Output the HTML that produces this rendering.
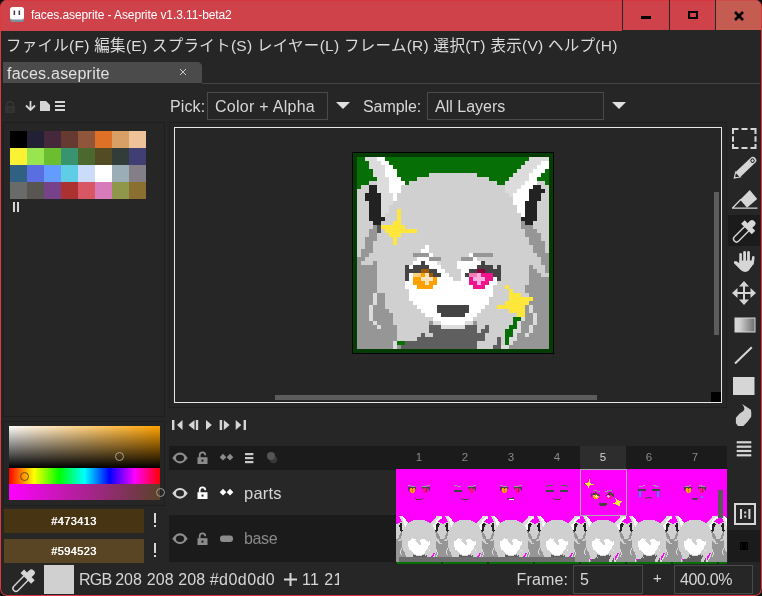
<!DOCTYPE html>
<html><head><meta charset="utf-8"><title>faces.aseprite - Aseprite v1.3.11-beta2</title>
<style>
*{box-sizing:border-box;margin:0;padding:0}
html,body{width:762px;height:596px;overflow:hidden;background:#101010}
body{position:relative;font-family:"Liberation Sans","Noto Sans CJK JP",sans-serif;color:#d6d6d6;font-size:16px}
.abs{position:absolute}
#win{left:0;top:0;width:762px;height:596px;background:#262626;border-radius:7px;overflow:hidden;will-change:transform}
#title{left:0;top:0;width:762px;height:31px}
#tbar{position:absolute;left:0;top:0;width:622px;height:31px;background:#d0424a;border-top:1px solid #d8363f}
#title .t{position:absolute;left:31px;top:8.3px;font-size:12px;letter-spacing:-.1px;color:#fff;white-space:nowrap;line-height:15px}
#frame{left:0;top:0;width:762px;height:596px;border-radius:7px;border-style:solid;border-color:#e0383f;border-width:0 1.3px 1.5px 1px}
.wbtn{position:absolute;top:0;height:30px;background:#d0424a;border-top:1px solid #d8363f}
#menu{left:6px;top:36px;font-size:15.5px;letter-spacing:.28px;line-height:20px;white-space:nowrap;color:#dcdcdc}
#tab{left:3px;top:62px;width:199px;height:21px;background:#4b4b4b}
#tab .n{position:absolute;left:4px;top:1.5px;font-size:16px;letter-spacing:.22px;line-height:20px;color:#e0e0e0}
#tabline{left:202px;top:83px;width:558px;height:1px;background:#444}
.lbl{position:absolute;font-size:16px;line-height:20px;white-space:nowrap;color:#d6d6d6}
.combo{position:absolute;border:1px solid #4a4a4a;background:#262626}
.combo span{position:absolute;left:7px;top:3.5px;font-size:16px;letter-spacing:0;line-height:20px;white-space:nowrap;color:#d6d6d6}
.panel{position:absolute;border:1px solid #1e1e1e;background:#262626}
#editor{left:174px;top:127px;width:548px;height:276px;border:1px solid #e6e6e6}
.dark{background:#1b1b1b}
.tl{position:absolute;font-size:16.5px;line-height:20px;white-space:nowrap}
.fn{position:absolute;top:450px;width:46px;text-align:center;font-size:11.5px;line-height:14px;color:#8a8a8a}
.hex{position:absolute;left:4px;width:139.5px;height:24px;text-align:center;font-size:11px;line-height:24px;color:#fff;letter-spacing:.4px;text-shadow:.45px 0 0 #fff}
.st{position:absolute;font-size:16px;line-height:22px;white-space:nowrap;color:#d6d6d6}
svg{position:absolute;overflow:visible}
</style></head><body>
<div id="win" class="abs">
<div id="title" class="abs"><div id="tbar"></div><div class="t">faces.aseprite - Aseprite v1.3.11-beta2</div>
<div class="wbtn" style="left:623px;width:46px"></div><div class="wbtn" style="left:670px;width:45px"></div><div class="wbtn" style="left:716px;background:#c45c52;width:46px;border-top-color:#cf4a4a"></div>
<svg style="left:10px;top:7px" width="14" height="15" viewBox="0 0 14 15"><rect x="0" y="1" width="14" height="14" rx="2.5" fill="#7b929e"/><rect x="0" y="0" width="14" height="12.5" rx="2.5" fill="#fff"/><rect x="3.6" y="3.5" width="1.5" height="4.5" fill="#4a3040"/><rect x="8.6" y="3.5" width="1.5" height="4.5" fill="#4a3040"/></svg>
<div class="abs" style="left:641px;top:16px;width:10px;height:3px;background:#000;"></div>
<div class="abs" style="left:688px;top:11px;width:10px;height:8px;border:2px solid #000"></div>
<svg style="left:734px;top:11.5px" width="10" height="8" viewBox="0 0 10 8"><path d="M1 0 L9 8 M9 0 L1 8" stroke="#000" stroke-width="2.6"/></svg>
</div>
<div id="menu" class="abs">ファイル(F) 編集(E) スプライト(S) レイヤー(L) フレーム(R) 選択(T) 表示(V) ヘルプ(H)</div>
<div id="tab" class="abs"><div class="n">faces.aseprite</div></div>
<svg style="left:179px;top:68px" width="8" height="8" viewBox="0 0 8 8"><path d="M1 1 L7 7 M7 1 L1 7" stroke="#c8c8c8" stroke-width="1"/></svg>
<div id="tabline" class="abs"></div>
<svg style="left:199px;top:62px" width="3" height="3" viewBox="0 0 3 3"><polygon points="0,0 3,0 3,3" fill="#262626"/></svg>
<div class="lbl" style="left:170px;top:96.5px;letter-spacing:.1px">Pick:</div>
<div class="combo" style="left:207px;top:92px;width:121px;height:28px"><span style="letter-spacing:.27px">Color + Alpha</span></div>
<div class="lbl" style="left:363px;top:96.5px;letter-spacing:-.07px">Sample:</div>
<div class="combo" style="left:427px;top:92px;width:177px;height:28px"><span>All Layers</span></div>
<svg style="left:336px;top:102px" width="14" height="7" viewBox="0 0 14 7"><path d="M0 0 H14 L7 7 Z" fill="#e0e0e0"/></svg>
<svg style="left:612px;top:102px" width="14" height="7" viewBox="0 0 14 7"><path d="M0 0 H14 L7 7 Z" fill="#e0e0e0"/></svg>
<svg style="left:5px;top:101px" width="10" height="12" viewBox="0 0 10 12"><path d="M1.6 6 V4 A3.4 3.2 0 0 1 8.4 4 V6" fill="none" stroke="#343434" stroke-width="2"/><rect x="0" y="5" width="10" height="7" fill="#343434"/><rect x="3.4" y="7.4" width="1" height="1" fill="#262626"/><rect x="5.8" y="7.4" width="1" height="1" fill="#262626"/><rect x="3.4" y="9.4" width="1" height="1" fill="#262626"/><rect x="5.8" y="9.4" width="1" height="1" fill="#262626"/></svg>
<svg style="left:25px;top:101px" width="11" height="10" viewBox="0 0 11 10"><path d="M5.5 0 V8 M1 4.5 L5.5 9 L10 4.5" stroke="#d6d6d6" stroke-width="1.8" fill="none"/></svg>
<svg style="left:40px;top:101px" width="10" height="10" viewBox="0 0 10 10"><path d="M0 0 H6 L10 4 V10 H0 Z" fill="#d6d6d6"/></svg>
<div class="abs" style="left:55px;top:101px;width:10px;height:2px;background:#d6d6d6;"></div>
<div class="abs" style="left:55px;top:105px;width:10px;height:2px;background:#d6d6d6;"></div>
<div class="abs" style="left:55px;top:109px;width:10px;height:2px;background:#d6d6d6;"></div>
<div class="panel" style="left:3px;top:122px;width:162px;height:295px"></div>
<div class="abs" style="left:10px;top:131px;width:17px;height:17px;background:#000000;"></div>
<div class="abs" style="left:27px;top:131px;width:17px;height:17px;background:#222034;"></div>
<div class="abs" style="left:44px;top:131px;width:17px;height:17px;background:#45283c;"></div>
<div class="abs" style="left:61px;top:131px;width:17px;height:17px;background:#663931;"></div>
<div class="abs" style="left:78px;top:131px;width:17px;height:17px;background:#8f563b;"></div>
<div class="abs" style="left:95px;top:131px;width:17px;height:17px;background:#df7126;"></div>
<div class="abs" style="left:112px;top:131px;width:17px;height:17px;background:#d9a066;"></div>
<div class="abs" style="left:129px;top:131px;width:17px;height:17px;background:#eec39a;"></div>
<div class="abs" style="left:10px;top:148px;width:17px;height:17px;background:#fbf236;"></div>
<div class="abs" style="left:27px;top:148px;width:17px;height:17px;background:#99e550;"></div>
<div class="abs" style="left:44px;top:148px;width:17px;height:17px;background:#6abe30;"></div>
<div class="abs" style="left:61px;top:148px;width:17px;height:17px;background:#37946e;"></div>
<div class="abs" style="left:78px;top:148px;width:17px;height:17px;background:#4b692f;"></div>
<div class="abs" style="left:95px;top:148px;width:17px;height:17px;background:#524b24;"></div>
<div class="abs" style="left:112px;top:148px;width:17px;height:17px;background:#323c39;"></div>
<div class="abs" style="left:129px;top:148px;width:17px;height:17px;background:#3f3f74;"></div>
<div class="abs" style="left:10px;top:165px;width:17px;height:17px;background:#306082;"></div>
<div class="abs" style="left:27px;top:165px;width:17px;height:17px;background:#5b6ee1;"></div>
<div class="abs" style="left:44px;top:165px;width:17px;height:17px;background:#639bff;"></div>
<div class="abs" style="left:61px;top:165px;width:17px;height:17px;background:#5fcde4;"></div>
<div class="abs" style="left:78px;top:165px;width:17px;height:17px;background:#cbdbfc;"></div>
<div class="abs" style="left:95px;top:165px;width:17px;height:17px;background:#ffffff;"></div>
<div class="abs" style="left:112px;top:165px;width:17px;height:17px;background:#9badb7;"></div>
<div class="abs" style="left:129px;top:165px;width:17px;height:17px;background:#847e87;"></div>
<div class="abs" style="left:10px;top:182px;width:17px;height:17px;background:#696a6a;"></div>
<div class="abs" style="left:27px;top:182px;width:17px;height:17px;background:#595652;"></div>
<div class="abs" style="left:44px;top:182px;width:17px;height:17px;background:#76428a;"></div>
<div class="abs" style="left:61px;top:182px;width:17px;height:17px;background:#ac3232;"></div>
<div class="abs" style="left:78px;top:182px;width:17px;height:17px;background:#d95763;"></div>
<div class="abs" style="left:95px;top:182px;width:17px;height:17px;background:#d77bba;"></div>
<div class="abs" style="left:112px;top:182px;width:17px;height:17px;background:#8f974a;"></div>
<div class="abs" style="left:129px;top:182px;width:17px;height:17px;background:#8a6f30;"></div>
<div class="abs" style="left:13px;top:202px;width:2px;height:10px;background:#d6d6d6;"></div>
<div class="abs" style="left:17px;top:202px;width:2px;height:10px;background:#d6d6d6;"></div>
<div class="panel" style="left:169px;top:122px;width:558px;height:286px"></div>
<div id="editor" class="abs"></div>
<div class="abs" style="left:352px;top:152px;width:202px;height:202px;background:#000;"></div>
<svg class="abs" style="left:353px;top:153px" width="200" height="200" viewBox="0 0 50 50" shape-rendering="crispEdges"><rect width="50" height="50" fill="#d0d0d0"/><rect x="0" y="0" width="50" height="1" fill="#043c04"/><rect x="0" y="1" width="1" height="1" fill="#043c04"/><rect x="1" y="1" width="2" height="1" fill="#067006"/><rect x="3" y="1" width="3" height="1" fill="#dcdcdc"/><rect x="6" y="1" width="2" height="1" fill="#ffffff"/><rect x="8" y="1" width="36" height="1" fill="#067006"/><rect x="44" y="1" width="5" height="1" fill="#dcdcdc"/><rect x="49" y="1" width="1" height="1" fill="#043c04"/><rect x="0" y="2" width="1" height="1" fill="#043c04"/><rect x="1" y="2" width="3" height="1" fill="#067006"/><rect x="4" y="2" width="3" height="1" fill="#dcdcdc"/><rect x="7" y="2" width="2" height="1" fill="#ffffff"/><rect x="9" y="2" width="34" height="1" fill="#067006"/><rect x="43" y="2" width="4" height="1" fill="#dcdcdc"/><rect x="47" y="2" width="2" height="1" fill="#ffffff"/><rect x="49" y="2" width="1" height="1" fill="#043c04"/><rect x="0" y="3" width="1" height="1" fill="#043c04"/><rect x="1" y="3" width="3" height="1" fill="#067006"/><rect x="4" y="3" width="4" height="1" fill="#dcdcdc"/><rect x="8" y="3" width="2" height="1" fill="#ffffff"/><rect x="10" y="3" width="32" height="1" fill="#067006"/><rect x="42" y="3" width="4" height="1" fill="#dcdcdc"/><rect x="46" y="3" width="3" height="1" fill="#ffffff"/><rect x="49" y="3" width="1" height="1" fill="#043c04"/><rect x="0" y="4" width="1" height="1" fill="#043c04"/><rect x="1" y="4" width="4" height="1" fill="#067006"/><rect x="5" y="4" width="3" height="1" fill="#dcdcdc"/><rect x="8" y="4" width="3" height="1" fill="#ffffff"/><rect x="11" y="4" width="30" height="1" fill="#067006"/><rect x="41" y="4" width="4" height="1" fill="#dcdcdc"/><rect x="45" y="4" width="3" height="1" fill="#ffffff"/><rect x="48" y="4" width="1" height="1" fill="#067006"/><rect x="49" y="4" width="1" height="1" fill="#043c04"/><rect x="0" y="5" width="1" height="1" fill="#043c04"/><rect x="1" y="5" width="4" height="1" fill="#067006"/><rect x="5" y="5" width="3" height="1" fill="#dcdcdc"/><rect x="8" y="5" width="3" height="1" fill="#ffffff"/><rect x="11" y="5" width="8" height="1" fill="#067006"/><rect x="31" y="5" width="9" height="1" fill="#067006"/><rect x="40" y="5" width="4" height="1" fill="#dcdcdc"/><rect x="44" y="5" width="3" height="1" fill="#ffffff"/><rect x="47" y="5" width="2" height="1" fill="#067006"/><rect x="49" y="5" width="1" height="1" fill="#043c04"/><rect x="0" y="6" width="1" height="1" fill="#043c04"/><rect x="1" y="6" width="5" height="1" fill="#067006"/><rect x="6" y="6" width="3" height="1" fill="#dcdcdc"/><rect x="9" y="6" width="3" height="1" fill="#ffffff"/><rect x="12" y="6" width="4" height="1" fill="#067006"/><rect x="34" y="6" width="5" height="1" fill="#067006"/><rect x="39" y="6" width="5" height="1" fill="#dcdcdc"/><rect x="44" y="6" width="2" height="1" fill="#ffffff"/><rect x="46" y="6" width="3" height="1" fill="#067006"/><rect x="49" y="6" width="1" height="1" fill="#043c04"/><rect x="0" y="7" width="1" height="1" fill="#043c04"/><rect x="1" y="7" width="3" height="1" fill="#067006"/><rect x="6" y="7" width="3" height="1" fill="#dcdcdc"/><rect x="9" y="7" width="4" height="1" fill="#ffffff"/><rect x="13" y="7" width="1" height="1" fill="#067006"/><rect x="36" y="7" width="2" height="1" fill="#067006"/><rect x="38" y="7" width="5" height="1" fill="#dcdcdc"/><rect x="43" y="7" width="3" height="1" fill="#ffffff"/><rect x="48" y="7" width="1" height="1" fill="#067006"/><rect x="49" y="7" width="1" height="1" fill="#043c04"/><rect x="0" y="8" width="1" height="1" fill="#043c04"/><rect x="1" y="8" width="1" height="1" fill="#067006"/><rect x="4" y="8" width="2" height="1" fill="#222222"/><rect x="6" y="8" width="3" height="1" fill="#dcdcdc"/><rect x="9" y="8" width="3" height="1" fill="#ffffff"/><rect x="38" y="8" width="4" height="1" fill="#dcdcdc"/><rect x="42" y="8" width="3" height="1" fill="#ffffff"/><rect x="45" y="8" width="2" height="1" fill="#222222"/><rect x="49" y="8" width="1" height="1" fill="#043c04"/><rect x="0" y="9" width="1" height="1" fill="#043c04"/><rect x="4" y="9" width="2" height="1" fill="#222222"/><rect x="6" y="9" width="3" height="1" fill="#dcdcdc"/><rect x="9" y="9" width="3" height="1" fill="#ffffff"/><rect x="38" y="9" width="3" height="1" fill="#dcdcdc"/><rect x="41" y="9" width="3" height="1" fill="#ffffff"/><rect x="44" y="9" width="4" height="1" fill="#222222"/><rect x="49" y="9" width="1" height="1" fill="#043c04"/><rect x="0" y="10" width="1" height="1" fill="#043c04"/><rect x="3" y="10" width="4" height="1" fill="#222222"/><rect x="7" y="10" width="3" height="1" fill="#dcdcdc"/><rect x="10" y="10" width="1" height="1" fill="#ffffff"/><rect x="39" y="10" width="1" height="1" fill="#dcdcdc"/><rect x="40" y="10" width="4" height="1" fill="#ffffff"/><rect x="44" y="10" width="3" height="1" fill="#222222"/><rect x="49" y="10" width="1" height="1" fill="#043c04"/><rect x="0" y="11" width="1" height="1" fill="#043c04"/><rect x="3" y="11" width="4" height="1" fill="#222222"/><rect x="7" y="11" width="3" height="1" fill="#dcdcdc"/><rect x="10" y="11" width="1" height="1" fill="#ffffff"/><rect x="40" y="11" width="4" height="1" fill="#ffffff"/><rect x="44" y="11" width="3" height="1" fill="#222222"/><rect x="49" y="11" width="1" height="1" fill="#043c04"/><rect x="0" y="12" width="1" height="1" fill="#043c04"/><rect x="4" y="12" width="3" height="1" fill="#222222"/><rect x="7" y="12" width="3" height="1" fill="#dcdcdc"/><rect x="40" y="12" width="3" height="1" fill="#ffffff"/><rect x="43" y="12" width="3" height="1" fill="#222222"/><rect x="49" y="12" width="1" height="1" fill="#043c04"/><rect x="0" y="13" width="1" height="1" fill="#043c04"/><rect x="4" y="13" width="3" height="1" fill="#222222"/><rect x="7" y="13" width="2" height="1" fill="#dcdcdc"/><rect x="41" y="13" width="2" height="1" fill="#ffffff"/><rect x="43" y="13" width="3" height="1" fill="#222222"/><rect x="49" y="13" width="1" height="1" fill="#043c04"/><rect x="0" y="14" width="1" height="1" fill="#043c04"/><rect x="4" y="14" width="3" height="1" fill="#222222"/><rect x="7" y="14" width="2" height="1" fill="#dcdcdc"/><rect x="11" y="14" width="1" height="1" fill="#ffe63a"/><rect x="41" y="14" width="2" height="1" fill="#ffffff"/><rect x="43" y="14" width="3" height="1" fill="#222222"/><rect x="49" y="14" width="1" height="1" fill="#043c04"/><rect x="0" y="15" width="1" height="1" fill="#043c04"/><rect x="4" y="15" width="3" height="1" fill="#222222"/><rect x="7" y="15" width="1" height="1" fill="#dcdcdc"/><rect x="11" y="15" width="1" height="1" fill="#ffe63a"/><rect x="42" y="15" width="1" height="1" fill="#ffffff"/><rect x="43" y="15" width="3" height="1" fill="#222222"/><rect x="49" y="15" width="1" height="1" fill="#043c04"/><rect x="0" y="16" width="1" height="1" fill="#043c04"/><rect x="4" y="16" width="4" height="1" fill="#222222"/><rect x="11" y="16" width="1" height="1" fill="#ffe63a"/><rect x="42" y="16" width="4" height="1" fill="#222222"/><rect x="49" y="16" width="1" height="1" fill="#043c04"/><rect x="0" y="17" width="1" height="1" fill="#043c04"/><rect x="5" y="17" width="2" height="1" fill="#222222"/><rect x="10" y="17" width="2" height="1" fill="#ffe63a"/><rect x="42" y="17" width="1" height="1" fill="#969696"/><rect x="43" y="17" width="2" height="1" fill="#222222"/><rect x="49" y="17" width="1" height="1" fill="#043c04"/><rect x="0" y="18" width="1" height="1" fill="#043c04"/><rect x="5" y="18" width="1" height="1" fill="#969696"/><rect x="6" y="18" width="1" height="1" fill="#555555"/><rect x="7" y="18" width="6" height="1" fill="#ffe63a"/><rect x="42" y="18" width="3" height="1" fill="#969696"/><rect x="49" y="18" width="1" height="1" fill="#043c04"/><rect x="0" y="19" width="1" height="1" fill="#043c04"/><rect x="4" y="19" width="2" height="1" fill="#969696"/><rect x="6" y="19" width="1" height="1" fill="#555555"/><rect x="8" y="19" width="8" height="1" fill="#ffe63a"/><rect x="43" y="19" width="3" height="1" fill="#969696"/><rect x="49" y="19" width="1" height="1" fill="#043c04"/><rect x="0" y="20" width="1" height="1" fill="#043c04"/><rect x="4" y="20" width="2" height="1" fill="#969696"/><rect x="9" y="20" width="3" height="1" fill="#ffe63a"/><rect x="43" y="20" width="4" height="1" fill="#969696"/><rect x="49" y="20" width="1" height="1" fill="#043c04"/><rect x="0" y="21" width="1" height="1" fill="#043c04"/><rect x="3" y="21" width="3" height="1" fill="#969696"/><rect x="10" y="21" width="1" height="1" fill="#ffe63a"/><rect x="44" y="21" width="3" height="1" fill="#969696"/><rect x="49" y="21" width="1" height="1" fill="#043c04"/><rect x="0" y="22" width="1" height="1" fill="#043c04"/><rect x="3" y="22" width="2" height="1" fill="#969696"/><rect x="10" y="22" width="1" height="1" fill="#ffe63a"/><rect x="44" y="22" width="4" height="1" fill="#969696"/><rect x="49" y="22" width="1" height="1" fill="#043c04"/><rect x="0" y="23" width="1" height="1" fill="#043c04"/><rect x="3" y="23" width="2" height="1" fill="#969696"/><rect x="18" y="23" width="1" height="1" fill="#ffffff"/><rect x="45" y="23" width="3" height="1" fill="#969696"/><rect x="49" y="23" width="1" height="1" fill="#043c04"/><rect x="0" y="24" width="1" height="1" fill="#043c04"/><rect x="2" y="24" width="3" height="1" fill="#969696"/><rect x="17" y="24" width="2" height="1" fill="#ffffff"/><rect x="45" y="24" width="3" height="1" fill="#969696"/><rect x="49" y="24" width="1" height="1" fill="#043c04"/><rect x="0" y="25" width="1" height="1" fill="#043c04"/><rect x="2" y="25" width="2" height="1" fill="#969696"/><rect x="15" y="25" width="4" height="1" fill="#969696"/><rect x="19" y="25" width="1" height="1" fill="#ffffff"/><rect x="29" y="25" width="1" height="1" fill="#ffffff"/><rect x="30" y="25" width="5" height="1" fill="#969696"/><rect x="46" y="25" width="3" height="1" fill="#969696"/><rect x="49" y="25" width="1" height="1" fill="#043c04"/><rect x="0" y="26" width="1" height="1" fill="#043c04"/><rect x="1" y="26" width="2" height="1" fill="#969696"/><rect x="16" y="26" width="3" height="1" fill="#ffffff"/><rect x="19" y="26" width="3" height="1" fill="#969696"/><rect x="27" y="26" width="3" height="1" fill="#969696"/><rect x="30" y="26" width="1" height="1" fill="#ffffff"/><rect x="47" y="26" width="2" height="1" fill="#969696"/><rect x="49" y="26" width="1" height="1" fill="#043c04"/><rect x="0" y="27" width="1" height="1" fill="#043c04"/><rect x="1" y="27" width="1" height="1" fill="#969696"/><rect x="5" y="27" width="1" height="1" fill="#969696"/><rect x="15" y="27" width="2" height="1" fill="#ffffff"/><rect x="17" y="27" width="1" height="1" fill="#444444"/><rect x="18" y="27" width="3" height="1" fill="#ffffff"/><rect x="21" y="27" width="1" height="1" fill="#dcdcdc"/><rect x="26" y="27" width="6" height="1" fill="#ffffff"/><rect x="32" y="27" width="1" height="1" fill="#444444"/><rect x="47" y="27" width="2" height="1" fill="#969696"/><rect x="49" y="27" width="1" height="1" fill="#043c04"/><rect x="0" y="28" width="1" height="1" fill="#043c04"/><rect x="1" y="28" width="5" height="1" fill="#969696"/><rect x="13" y="28" width="1" height="1" fill="#444444"/><rect x="14" y="28" width="1" height="1" fill="#ffffff"/><rect x="15" y="28" width="4" height="1" fill="#444444"/><rect x="19" y="28" width="3" height="1" fill="#ffffff"/><rect x="26" y="28" width="5" height="1" fill="#ffffff"/><rect x="31" y="28" width="4" height="1" fill="#444444"/><rect x="36" y="28" width="1" height="1" fill="#444444"/><rect x="44" y="28" width="1" height="1" fill="#969696"/><rect x="48" y="28" width="1" height="1" fill="#969696"/><rect x="49" y="28" width="1" height="1" fill="#043c04"/><rect x="0" y="29" width="1" height="1" fill="#043c04"/><rect x="1" y="29" width="5" height="1" fill="#969696"/><rect x="13" y="29" width="4" height="1" fill="#444444"/><rect x="17" y="29" width="2" height="1" fill="#a05a00"/><rect x="19" y="29" width="2" height="1" fill="#444444"/><rect x="21" y="29" width="2" height="1" fill="#ffffff"/><rect x="27" y="29" width="2" height="1" fill="#ffffff"/><rect x="29" y="29" width="2" height="1" fill="#444444"/><rect x="31" y="29" width="2" height="1" fill="#900040"/><rect x="33" y="29" width="4" height="1" fill="#444444"/><rect x="44" y="29" width="2" height="1" fill="#969696"/><rect x="48" y="29" width="1" height="1" fill="#969696"/><rect x="49" y="29" width="1" height="1" fill="#043c04"/><rect x="0" y="30" width="1" height="1" fill="#043c04"/><rect x="1" y="30" width="5" height="1" fill="#969696"/><rect x="13" y="30" width="1" height="1" fill="#444444"/><rect x="14" y="30" width="1" height="1" fill="#ffffff"/><rect x="15" y="30" width="2" height="1" fill="#ffd080"/><rect x="17" y="30" width="1" height="1" fill="#ffa200"/><rect x="18" y="30" width="1" height="1" fill="#ffe4c0"/><rect x="19" y="30" width="1" height="1" fill="#a05a00"/><rect x="20" y="30" width="2" height="1" fill="#444444"/><rect x="22" y="30" width="2" height="1" fill="#ffffff"/><rect x="27" y="30" width="1" height="1" fill="#ffffff"/><rect x="28" y="30" width="1" height="1" fill="#444444"/><rect x="29" y="30" width="2" height="1" fill="#ff7ab8"/><rect x="31" y="30" width="1" height="1" fill="#ffb0e0"/><rect x="32" y="30" width="3" height="1" fill="#f0148c"/><rect x="35" y="30" width="2" height="1" fill="#444444"/><rect x="44" y="30" width="3" height="1" fill="#969696"/><rect x="49" y="30" width="1" height="1" fill="#043c04"/><rect x="0" y="31" width="1" height="1" fill="#043c04"/><rect x="1" y="31" width="5" height="1" fill="#969696"/><rect x="13" y="31" width="1" height="1" fill="#444444"/><rect x="14" y="31" width="1" height="1" fill="#ffffff"/><rect x="15" y="31" width="2" height="1" fill="#ffa200"/><rect x="17" y="31" width="3" height="1" fill="#ffe4c0"/><rect x="20" y="31" width="1" height="1" fill="#ffa200"/><rect x="21" y="31" width="4" height="1" fill="#ffffff"/><rect x="27" y="31" width="2" height="1" fill="#ffffff"/><rect x="29" y="31" width="1" height="1" fill="#f0148c"/><rect x="30" y="31" width="3" height="1" fill="#ffb0e0"/><rect x="33" y="31" width="2" height="1" fill="#f0148c"/><rect x="35" y="31" width="1" height="1" fill="#ffffff"/><rect x="36" y="31" width="1" height="1" fill="#444444"/><rect x="44" y="31" width="5" height="1" fill="#969696"/><rect x="49" y="31" width="1" height="1" fill="#043c04"/><rect x="0" y="32" width="1" height="1" fill="#043c04"/><rect x="1" y="32" width="5" height="1" fill="#969696"/><rect x="13" y="32" width="2" height="1" fill="#ffffff"/><rect x="15" y="32" width="3" height="1" fill="#ffa200"/><rect x="18" y="32" width="1" height="1" fill="#ffe4c0"/><rect x="19" y="32" width="2" height="1" fill="#ffa200"/><rect x="21" y="32" width="8" height="1" fill="#ffffff"/><rect x="29" y="32" width="2" height="1" fill="#f0148c"/><rect x="31" y="32" width="1" height="1" fill="#ffb0e0"/><rect x="32" y="32" width="2" height="1" fill="#f0148c"/><rect x="34" y="32" width="2" height="1" fill="#ffffff"/><rect x="44" y="32" width="5" height="1" fill="#969696"/><rect x="49" y="32" width="1" height="1" fill="#043c04"/><rect x="0" y="33" width="1" height="1" fill="#043c04"/><rect x="1" y="33" width="5" height="1" fill="#969696"/><rect x="13" y="33" width="3" height="1" fill="#ffffff"/><rect x="16" y="33" width="4" height="1" fill="#ffa200"/><rect x="20" y="33" width="10" height="1" fill="#ffffff"/><rect x="30" y="33" width="3" height="1" fill="#f0148c"/><rect x="33" y="33" width="2" height="1" fill="#ffffff"/><rect x="38" y="33" width="1" height="1" fill="#ffe63a"/><rect x="43" y="33" width="6" height="1" fill="#969696"/><rect x="49" y="33" width="1" height="1" fill="#043c04"/><rect x="0" y="34" width="1" height="1" fill="#043c04"/><rect x="1" y="34" width="5" height="1" fill="#969696"/><rect x="14" y="34" width="21" height="1" fill="#ffffff"/><rect x="39" y="34" width="1" height="1" fill="#ffe63a"/><rect x="43" y="34" width="6" height="1" fill="#969696"/><rect x="49" y="34" width="1" height="1" fill="#043c04"/><rect x="0" y="35" width="1" height="1" fill="#043c04"/><rect x="1" y="35" width="4" height="1" fill="#969696"/><rect x="5" y="35" width="1" height="1" fill="#dcdcdc"/><rect x="6" y="35" width="2" height="1" fill="#969696"/><rect x="14" y="35" width="21" height="1" fill="#ffffff"/><rect x="39" y="35" width="3" height="1" fill="#ffe63a"/><rect x="44" y="35" width="5" height="1" fill="#969696"/><rect x="49" y="35" width="1" height="1" fill="#043c04"/><rect x="0" y="36" width="1" height="1" fill="#043c04"/><rect x="1" y="36" width="4" height="1" fill="#969696"/><rect x="5" y="36" width="1" height="1" fill="#dcdcdc"/><rect x="6" y="36" width="2" height="1" fill="#969696"/><rect x="14" y="36" width="20" height="1" fill="#ffffff"/><rect x="39" y="36" width="6" height="1" fill="#ffe63a"/><rect x="45" y="36" width="4" height="1" fill="#969696"/><rect x="49" y="36" width="1" height="1" fill="#043c04"/><rect x="0" y="37" width="1" height="1" fill="#043c04"/><rect x="1" y="37" width="4" height="1" fill="#969696"/><rect x="5" y="37" width="1" height="1" fill="#dcdcdc"/><rect x="6" y="37" width="2" height="1" fill="#969696"/><rect x="15" y="37" width="19" height="1" fill="#ffffff"/><rect x="38" y="37" width="6" height="1" fill="#ffe63a"/><rect x="44" y="37" width="5" height="1" fill="#969696"/><rect x="49" y="37" width="1" height="1" fill="#043c04"/><rect x="0" y="38" width="1" height="1" fill="#043c04"/><rect x="1" y="38" width="3" height="1" fill="#969696"/><rect x="4" y="38" width="1" height="1" fill="#dcdcdc"/><rect x="5" y="38" width="3" height="1" fill="#969696"/><rect x="16" y="38" width="5" height="1" fill="#ffffff"/><rect x="21" y="38" width="8" height="1" fill="#444444"/><rect x="29" y="38" width="4" height="1" fill="#ffffff"/><rect x="36" y="38" width="7" height="1" fill="#ffe63a"/><rect x="43" y="38" width="1" height="1" fill="#969696"/><rect x="44" y="38" width="1" height="1" fill="#dcdcdc"/><rect x="45" y="38" width="4" height="1" fill="#969696"/><rect x="49" y="38" width="1" height="1" fill="#043c04"/><rect x="0" y="39" width="1" height="1" fill="#043c04"/><rect x="1" y="39" width="3" height="1" fill="#969696"/><rect x="4" y="39" width="1" height="1" fill="#dcdcdc"/><rect x="5" y="39" width="4" height="1" fill="#969696"/><rect x="17" y="39" width="4" height="1" fill="#ffffff"/><rect x="21" y="39" width="8" height="1" fill="#444444"/><rect x="29" y="39" width="3" height="1" fill="#ffffff"/><rect x="39" y="39" width="4" height="1" fill="#ffe63a"/><rect x="43" y="39" width="1" height="1" fill="#969696"/><rect x="44" y="39" width="1" height="1" fill="#dcdcdc"/><rect x="45" y="39" width="4" height="1" fill="#969696"/><rect x="49" y="39" width="1" height="1" fill="#043c04"/><rect x="0" y="40" width="1" height="1" fill="#043c04"/><rect x="1" y="40" width="3" height="1" fill="#969696"/><rect x="4" y="40" width="1" height="1" fill="#dcdcdc"/><rect x="5" y="40" width="5" height="1" fill="#969696"/><rect x="18" y="40" width="4" height="1" fill="#ffffff"/><rect x="22" y="40" width="6" height="1" fill="#444444"/><rect x="28" y="40" width="3" height="1" fill="#ffffff"/><rect x="41" y="40" width="2" height="1" fill="#ffe63a"/><rect x="43" y="40" width="2" height="1" fill="#969696"/><rect x="45" y="40" width="1" height="1" fill="#dcdcdc"/><rect x="46" y="40" width="3" height="1" fill="#969696"/><rect x="49" y="40" width="1" height="1" fill="#043c04"/><rect x="0" y="41" width="1" height="1" fill="#043c04"/><rect x="1" y="41" width="3" height="1" fill="#969696"/><rect x="4" y="41" width="1" height="1" fill="#dcdcdc"/><rect x="5" y="41" width="5" height="1" fill="#969696"/><rect x="20" y="41" width="10" height="1" fill="#ffffff"/><rect x="40" y="41" width="2" height="1" fill="#067006"/><rect x="42" y="41" width="1" height="1" fill="#dcdcdc"/><rect x="43" y="41" width="2" height="1" fill="#969696"/><rect x="45" y="41" width="1" height="1" fill="#dcdcdc"/><rect x="46" y="41" width="3" height="1" fill="#969696"/><rect x="49" y="41" width="1" height="1" fill="#043c04"/><rect x="0" y="42" width="1" height="1" fill="#043c04"/><rect x="1" y="42" width="4" height="1" fill="#969696"/><rect x="5" y="42" width="1" height="1" fill="#dcdcdc"/><rect x="6" y="42" width="4" height="1" fill="#969696"/><rect x="19" y="42" width="1" height="1" fill="#969696"/><rect x="20" y="42" width="2" height="1" fill="#dcdcdc"/><rect x="22" y="42" width="6" height="1" fill="#ffffff"/><rect x="28" y="42" width="2" height="1" fill="#dcdcdc"/><rect x="30" y="42" width="1" height="1" fill="#969696"/><rect x="40" y="42" width="1" height="1" fill="#067006"/><rect x="41" y="42" width="1" height="1" fill="#dcdcdc"/><rect x="42" y="42" width="3" height="1" fill="#969696"/><rect x="45" y="42" width="1" height="1" fill="#dcdcdc"/><rect x="46" y="42" width="3" height="1" fill="#969696"/><rect x="49" y="42" width="1" height="1" fill="#043c04"/><rect x="0" y="43" width="1" height="1" fill="#043c04"/><rect x="1" y="43" width="5" height="1" fill="#969696"/><rect x="6" y="43" width="1" height="1" fill="#dcdcdc"/><rect x="7" y="43" width="4" height="1" fill="#969696"/><rect x="19" y="43" width="3" height="1" fill="#5f5f5f"/><rect x="22" y="43" width="6" height="1" fill="#dcdcdc"/><rect x="28" y="43" width="3" height="1" fill="#5f5f5f"/><rect x="33" y="43" width="1" height="1" fill="#5f5f5f"/><rect x="39" y="43" width="2" height="1" fill="#067006"/><rect x="41" y="43" width="1" height="1" fill="#dcdcdc"/><rect x="42" y="43" width="2" height="1" fill="#969696"/><rect x="44" y="43" width="1" height="1" fill="#dcdcdc"/><rect x="45" y="43" width="4" height="1" fill="#969696"/><rect x="49" y="43" width="1" height="1" fill="#043c04"/><rect x="0" y="44" width="1" height="1" fill="#043c04"/><rect x="1" y="44" width="10" height="1" fill="#969696"/><rect x="19" y="44" width="12" height="1" fill="#5f5f5f"/><rect x="32" y="44" width="2" height="1" fill="#5f5f5f"/><rect x="38" y="44" width="2" height="1" fill="#067006"/><rect x="40" y="44" width="2" height="1" fill="#dcdcdc"/><rect x="42" y="44" width="2" height="1" fill="#969696"/><rect x="44" y="44" width="1" height="1" fill="#dcdcdc"/><rect x="45" y="44" width="4" height="1" fill="#969696"/><rect x="49" y="44" width="1" height="1" fill="#043c04"/><rect x="0" y="45" width="1" height="1" fill="#043c04"/><rect x="1" y="45" width="10" height="1" fill="#969696"/><rect x="17" y="45" width="1" height="1" fill="#5f5f5f"/><rect x="20" y="45" width="13" height="1" fill="#5f5f5f"/><rect x="38" y="45" width="2" height="1" fill="#067006"/><rect x="40" y="45" width="1" height="1" fill="#dcdcdc"/><rect x="41" y="45" width="2" height="1" fill="#969696"/><rect x="43" y="45" width="1" height="1" fill="#dcdcdc"/><rect x="44" y="45" width="5" height="1" fill="#969696"/><rect x="49" y="45" width="1" height="1" fill="#043c04"/><rect x="0" y="46" width="1" height="1" fill="#043c04"/><rect x="1" y="46" width="10" height="1" fill="#969696"/><rect x="16" y="46" width="17" height="1" fill="#5f5f5f"/><rect x="36" y="46" width="1" height="1" fill="#5f5f5f"/><rect x="38" y="46" width="1" height="1" fill="#067006"/><rect x="39" y="46" width="2" height="1" fill="#dcdcdc"/><rect x="41" y="46" width="8" height="1" fill="#969696"/><rect x="49" y="46" width="1" height="1" fill="#043c04"/><rect x="0" y="47" width="1" height="1" fill="#043c04"/><rect x="1" y="47" width="9" height="1" fill="#969696"/><rect x="10" y="47" width="1" height="1" fill="#dcdcdc"/><rect x="11" y="47" width="2" height="1" fill="#067006"/><rect x="13" y="47" width="18" height="1" fill="#5f5f5f"/><rect x="36" y="47" width="1" height="1" fill="#5f5f5f"/><rect x="38" y="47" width="1" height="1" fill="#067006"/><rect x="39" y="47" width="1" height="1" fill="#dcdcdc"/><rect x="40" y="47" width="9" height="1" fill="#969696"/><rect x="49" y="47" width="1" height="1" fill="#043c04"/><rect x="0" y="48" width="1" height="1" fill="#043c04"/><rect x="1" y="48" width="9" height="1" fill="#969696"/><rect x="10" y="48" width="1" height="1" fill="#dcdcdc"/><rect x="11" y="48" width="1" height="1" fill="#969696"/><rect x="12" y="48" width="19" height="1" fill="#5f5f5f"/><rect x="35" y="48" width="2" height="1" fill="#5f5f5f"/><rect x="37" y="48" width="2" height="1" fill="#dcdcdc"/><rect x="39" y="48" width="10" height="1" fill="#969696"/><rect x="49" y="48" width="1" height="1" fill="#043c04"/><rect x="0" y="49" width="50" height="1" fill="#043c04"/></svg>
<div class="abs" style="left:714px;top:192px;width:4.5px;height:143px;background:#5c5c5c;"></div>
<div class="abs" style="left:275px;top:395px;width:322px;height:5px;background:#5c5c5c;"></div>
<div class="abs" style="left:711px;top:392px;width:10px;height:10px;background:#000;"></div>
<svg style="left:0;top:0" width="762" height="596" viewBox="0 0 762 596"><rect x="172" y="420" width="2.4" height="10" fill="#d6d6d6"/><polygon points="182.5,420 182.5,430 177,425" fill="#d6d6d6"/><polygon points="194.5,420 194.5,430 188.5,425" fill="#d6d6d6"/><rect x="195.8" y="420" width="2.4" height="10" fill="#d6d6d6"/><polygon points="206,420 206,430 211.8,425" fill="#d6d6d6"/><rect x="219.7" y="420" width="2.4" height="10" fill="#d6d6d6"/><polygon points="223.8,420 223.8,430 229.6,425" fill="#d6d6d6"/><polygon points="235.7,420 235.7,430 241.3,425" fill="#d6d6d6"/><rect x="243.6" y="420" width="2.4" height="10" fill="#d6d6d6"/></svg>
<div class="panel" style="left:3px;top:421px;width:162px;height:85px"></div>
<div class="abs" style="left:9px;top:426px;width:151px;height:42px;background:linear-gradient(to bottom,rgba(0,0,0,0),#000),linear-gradient(to right,#fff,#ffa200)"></div>
<div class="abs" style="left:9px;top:468px;width:151px;height:16px;background:linear-gradient(to right,#f00,#ff0 16.6%,#0f0 33.3%,#0ff 50%,#00f 66.6%,#f0f 83.3%,#f00)"></div>
<div class="abs" style="left:9px;top:484px;width:151px;height:16px;background:linear-gradient(to right,#ff00ff,#5a4228)"></div>
<div class="abs" style="left:114.5px;top:451.5px;width:9px;height:9px;border:1.6px solid #a8a08e;border-radius:50%"></div>
<div class="abs" style="left:19.5px;top:471.5px;width:9px;height:9px;border:1.6px solid #6a4d10;border-radius:50%"></div>
<div class="abs" style="left:155.5px;top:487.7px;width:9px;height:9px;border:1.6px solid #9a9a9a;border-radius:50%"></div>
<div class="hex" style="top:509px;background:#473413">#473413</div>
<div class="hex" style="top:539px;background:#594523">#594523</div>
<div class="abs" style="left:154px;top:513px;width:2px;height:10px;background:#d6d6d6;"></div>
<div class="abs" style="left:154px;top:525px;width:2px;height:2px;background:#d6d6d6;"></div>
<div class="abs" style="left:154px;top:543px;width:2px;height:10px;background:#d6d6d6;"></div>
<div class="abs" style="left:154px;top:555px;width:2px;height:2px;background:#d6d6d6;"></div>
<div class="abs" style="left:169px;top:446px;width:558px;height:23.5px;background:#1b1b1b;"></div>
<div class="abs" style="left:169px;top:469.5px;width:227px;height:45.5px;background:#272727;"></div>
<div class="abs" style="left:169px;top:515px;width:558px;height:47px;background:#1b1b1b;"></div>
<div class="abs" style="left:580px;top:446px;width:46px;height:23.5px;background:#2d2d2d;"></div>
<div class="fn" style="left:396px;color:#8a8a8a">1</div>
<div class="fn" style="left:442px;color:#8a8a8a">2</div>
<div class="fn" style="left:488px;color:#8a8a8a">3</div>
<div class="fn" style="left:534px;color:#8a8a8a">4</div>
<div class="fn" style="left:580px;color:#d6d6d6">5</div>
<div class="fn" style="left:626px;color:#8a8a8a">6</div>
<div class="fn" style="left:672px;color:#8a8a8a">7</div>
<div class="tl" style="left:244px;top:482.5px;color:#d6d6d6;letter-spacing:.2px">parts</div>
<div class="tl" style="left:244px;top:529px;color:#8a8a8a;font-size:16px;letter-spacing:-.35px">base</div>
<svg style="left:0;top:0" width="762" height="596" viewBox="0 0 762 596"><path d="M172.3 458 Q176 452.6 180 452.6 Q184 452.6 187.7 458 Q184 463.4 180 463.4 Q176 463.4 172.3 458 Z M176.0 458 A4.0 3.2 0 1 0 184.0 458 A4.0 3.2 0 1 0 176.0 458 Z" fill="#8c8c8c" fill-rule="evenodd"/><path d="M199.7 457.5 V455.2 A2.8 2.8 0 0 1 205.3 455.2" fill="none" stroke="#8c8c8c" stroke-width="1.7"/><rect x="197.5" y="457.2" width="10" height="6.8" fill="#8c8c8c"/><rect x="201.5" y="459.6" width="2" height="2" fill="#1b1b1b"/><polygon points="219.7,457.2 223.0,453.8 226.29999999999998,457.2 223.0,460.59999999999997" fill="#8c8c8c"/><polygon points="226.7,457.2 230.0,453.8 233.29999999999998,457.2 230.0,460.59999999999997" fill="#8c8c8c"/><rect x="245" y="453" width="8.4" height="2.2" fill="#c8c8c8"/><rect x="245" y="457" width="8.4" height="2.2" fill="#c8c8c8"/><rect x="245" y="461" width="8.4" height="2.2" fill="#c8c8c8"/><circle cx="273.5" cy="459.5" r="3.8" fill="#383838"/><circle cx="271" cy="456" r="4" fill="#555"/><path d="M172.3 493.3 Q176 487.90000000000003 180 487.90000000000003 Q184 487.90000000000003 187.7 493.3 Q184 498.7 180 498.7 Q176 498.7 172.3 493.3 Z M176.0 493.3 A4.0 3.2 0 1 0 184.0 493.3 A4.0 3.2 0 1 0 176.0 493.3 Z" fill="#d6d6d6" fill-rule="evenodd"/><path d="M199.7 492.5 V490.2 A2.8 2.8 0 0 1 205.3 490.2" fill="none" stroke="#fff" stroke-width="1.7"/><rect x="197.5" y="492.2" width="10" height="6.8" fill="#fff"/><rect x="201.5" y="494.6" width="2" height="2" fill="#272727"/><polygon points="219.7,492.2 223.0,488.8 226.29999999999998,492.2 223.0,495.59999999999997" fill="#fff"/><polygon points="226.7,492.2 230.0,488.8 233.29999999999998,492.2 230.0,495.59999999999997" fill="#fff"/><path d="M172.3 538.7 Q176 533.3000000000001 180 533.3000000000001 Q184 533.3000000000001 187.7 538.7 Q184 544.1 180 544.1 Q176 544.1 172.3 538.7 Z M176.0 538.7 A4.0 3.2 0 1 0 184.0 538.7 A4.0 3.2 0 1 0 176.0 538.7 Z" fill="#8c8c8c" fill-rule="evenodd"/><path d="M199.7 538.5 V536.2 A2.8 2.8 0 0 1 205.3 536.2" fill="none" stroke="#8c8c8c" stroke-width="1.7"/><rect x="197.5" y="538.2" width="10" height="6.8" fill="#8c8c8c"/><rect x="201.5" y="540.6" width="2" height="2" fill="#1b1b1b"/><rect x="220" y="535.5" width="13" height="6.5" rx="3" fill="#8c8c8c"/></svg>
<div id="cels" class="abs" style="left:396px;top:469px;width:331px;height:93px;background:#ff00ff;overflow:hidden">
<svg style="left:0;top:0" width="0" height="0"><defs><g id="th" shape-rendering="crispEdges"><rect x="0" y="5" width="50" height="45" fill="none"/><rect x="3" y="0" width="3" height="1.05" fill="#dcdcdc"/><rect x="6" y="0" width="2" height="1.05" fill="#ffffff"/><rect x="44" y="0" width="6" height="1.05" fill="#dcdcdc"/><rect x="3" y="1" width="3" height="1.05" fill="#dcdcdc"/><rect x="6" y="1" width="2" height="1.05" fill="#ffffff"/><rect x="44" y="1" width="6" height="1.05" fill="#dcdcdc"/><rect x="4" y="2" width="3" height="1.05" fill="#dcdcdc"/><rect x="7" y="2" width="2" height="1.05" fill="#ffffff"/><rect x="43" y="2" width="4" height="1.05" fill="#dcdcdc"/><rect x="47" y="2" width="3" height="1.05" fill="#ffffff"/><rect x="4" y="3" width="4" height="1.05" fill="#dcdcdc"/><rect x="8" y="3" width="2" height="1.05" fill="#ffffff"/><rect x="42" y="3" width="4" height="1.05" fill="#dcdcdc"/><rect x="46" y="3" width="4" height="1.05" fill="#ffffff"/><rect x="5" y="4" width="3" height="1.05" fill="#dcdcdc"/><rect x="8" y="4" width="3" height="1.05" fill="#ffffff"/><rect x="41" y="4" width="4" height="1.05" fill="#dcdcdc"/><rect x="45" y="4" width="3" height="1.05" fill="#ffffff"/><rect x="5" y="5" width="3" height="1.05" fill="#dcdcdc"/><rect x="8" y="5" width="3" height="1.05" fill="#ffffff"/><rect x="19" y="5" width="12" height="1.05" fill="#d0d0d0"/><rect x="40" y="5" width="4" height="1.05" fill="#dcdcdc"/><rect x="44" y="5" width="3" height="1.05" fill="#ffffff"/><rect x="6" y="6" width="3" height="1.05" fill="#dcdcdc"/><rect x="9" y="6" width="3" height="1.05" fill="#ffffff"/><rect x="16" y="6" width="18" height="1.05" fill="#d0d0d0"/><rect x="39" y="6" width="5" height="1.05" fill="#dcdcdc"/><rect x="44" y="6" width="2" height="1.05" fill="#ffffff"/><rect x="4" y="7" width="2" height="1.05" fill="#d0d0d0"/><rect x="6" y="7" width="3" height="1.05" fill="#dcdcdc"/><rect x="9" y="7" width="4" height="1.05" fill="#ffffff"/><rect x="14" y="7" width="22" height="1.05" fill="#d0d0d0"/><rect x="38" y="7" width="5" height="1.05" fill="#dcdcdc"/><rect x="43" y="7" width="3" height="1.05" fill="#ffffff"/><rect x="46" y="7" width="2" height="1.05" fill="#d0d0d0"/><rect x="2" y="8" width="2" height="1.05" fill="#d0d0d0"/><rect x="4" y="8" width="2" height="1.05" fill="#222222"/><rect x="6" y="8" width="3" height="1.05" fill="#dcdcdc"/><rect x="9" y="8" width="3" height="1.05" fill="#ffffff"/><rect x="12" y="8" width="26" height="1.05" fill="#d0d0d0"/><rect x="38" y="8" width="4" height="1.05" fill="#dcdcdc"/><rect x="42" y="8" width="3" height="1.05" fill="#ffffff"/><rect x="45" y="8" width="2" height="1.05" fill="#222222"/><rect x="47" y="8" width="3" height="1.05" fill="#d0d0d0"/><rect x="0" y="9" width="4" height="1.05" fill="#d0d0d0"/><rect x="4" y="9" width="2" height="1.05" fill="#222222"/><rect x="6" y="9" width="3" height="1.05" fill="#dcdcdc"/><rect x="9" y="9" width="3" height="1.05" fill="#ffffff"/><rect x="12" y="9" width="26" height="1.05" fill="#d0d0d0"/><rect x="38" y="9" width="3" height="1.05" fill="#dcdcdc"/><rect x="41" y="9" width="3" height="1.05" fill="#ffffff"/><rect x="44" y="9" width="4" height="1.05" fill="#222222"/><rect x="48" y="9" width="2" height="1.05" fill="#d0d0d0"/><rect x="0" y="10" width="3" height="1.05" fill="#d0d0d0"/><rect x="3" y="10" width="4" height="1.05" fill="#222222"/><rect x="7" y="10" width="3" height="1.05" fill="#dcdcdc"/><rect x="10" y="10" width="1" height="1.05" fill="#ffffff"/><rect x="11" y="10" width="28" height="1.05" fill="#d0d0d0"/><rect x="39" y="10" width="1" height="1.05" fill="#dcdcdc"/><rect x="40" y="10" width="4" height="1.05" fill="#ffffff"/><rect x="44" y="10" width="3" height="1.05" fill="#222222"/><rect x="47" y="10" width="3" height="1.05" fill="#d0d0d0"/><rect x="0" y="11" width="3" height="1.05" fill="#d0d0d0"/><rect x="3" y="11" width="4" height="1.05" fill="#222222"/><rect x="7" y="11" width="3" height="1.05" fill="#dcdcdc"/><rect x="10" y="11" width="1" height="1.05" fill="#ffffff"/><rect x="11" y="11" width="29" height="1.05" fill="#d0d0d0"/><rect x="40" y="11" width="4" height="1.05" fill="#ffffff"/><rect x="44" y="11" width="3" height="1.05" fill="#222222"/><rect x="47" y="11" width="3" height="1.05" fill="#d0d0d0"/><rect x="0" y="12" width="4" height="1.05" fill="#d0d0d0"/><rect x="4" y="12" width="3" height="1.05" fill="#222222"/><rect x="7" y="12" width="3" height="1.05" fill="#dcdcdc"/><rect x="10" y="12" width="30" height="1.05" fill="#d0d0d0"/><rect x="40" y="12" width="3" height="1.05" fill="#ffffff"/><rect x="43" y="12" width="3" height="1.05" fill="#222222"/><rect x="46" y="12" width="4" height="1.05" fill="#d0d0d0"/><rect x="0" y="13" width="4" height="1.05" fill="#d0d0d0"/><rect x="4" y="13" width="3" height="1.05" fill="#222222"/><rect x="7" y="13" width="2" height="1.05" fill="#dcdcdc"/><rect x="9" y="13" width="32" height="1.05" fill="#d0d0d0"/><rect x="41" y="13" width="2" height="1.05" fill="#ffffff"/><rect x="43" y="13" width="3" height="1.05" fill="#222222"/><rect x="46" y="13" width="4" height="1.05" fill="#d0d0d0"/><rect x="0" y="14" width="4" height="1.05" fill="#d0d0d0"/><rect x="4" y="14" width="3" height="1.05" fill="#222222"/><rect x="7" y="14" width="2" height="1.05" fill="#dcdcdc"/><rect x="9" y="14" width="32" height="1.05" fill="#d0d0d0"/><rect x="41" y="14" width="2" height="1.05" fill="#ffffff"/><rect x="43" y="14" width="3" height="1.05" fill="#222222"/><rect x="46" y="14" width="4" height="1.05" fill="#d0d0d0"/><rect x="0" y="15" width="4" height="1.05" fill="#d0d0d0"/><rect x="4" y="15" width="3" height="1.05" fill="#222222"/><rect x="7" y="15" width="1" height="1.05" fill="#dcdcdc"/><rect x="8" y="15" width="34" height="1.05" fill="#d0d0d0"/><rect x="42" y="15" width="1" height="1.05" fill="#ffffff"/><rect x="43" y="15" width="3" height="1.05" fill="#222222"/><rect x="46" y="15" width="4" height="1.05" fill="#d0d0d0"/><rect x="0" y="16" width="4" height="1.05" fill="#d0d0d0"/><rect x="4" y="16" width="4" height="1.05" fill="#222222"/><rect x="8" y="16" width="34" height="1.05" fill="#d0d0d0"/><rect x="42" y="16" width="4" height="1.05" fill="#222222"/><rect x="46" y="16" width="4" height="1.05" fill="#d0d0d0"/><rect x="0" y="17" width="5" height="1.05" fill="#d0d0d0"/><rect x="5" y="17" width="2" height="1.05" fill="#222222"/><rect x="7" y="17" width="35" height="1.05" fill="#d0d0d0"/><rect x="42" y="17" width="1" height="1.05" fill="#969696"/><rect x="43" y="17" width="2" height="1.05" fill="#222222"/><rect x="45" y="17" width="5" height="1.05" fill="#d0d0d0"/><rect x="0" y="18" width="5" height="1.05" fill="#d0d0d0"/><rect x="5" y="18" width="1" height="1.05" fill="#969696"/><rect x="6" y="18" width="36" height="1.05" fill="#d0d0d0"/><rect x="42" y="18" width="3" height="1.05" fill="#969696"/><rect x="45" y="18" width="5" height="1.05" fill="#d0d0d0"/><rect x="0" y="19" width="4" height="1.05" fill="#d0d0d0"/><rect x="4" y="19" width="2" height="1.05" fill="#969696"/><rect x="6" y="19" width="37" height="1.05" fill="#d0d0d0"/><rect x="43" y="19" width="3" height="1.05" fill="#969696"/><rect x="46" y="19" width="4" height="1.05" fill="#d0d0d0"/><rect x="0" y="20" width="4" height="1.05" fill="#d0d0d0"/><rect x="4" y="20" width="2" height="1.05" fill="#969696"/><rect x="6" y="20" width="37" height="1.05" fill="#d0d0d0"/><rect x="43" y="20" width="4" height="1.05" fill="#969696"/><rect x="47" y="20" width="3" height="1.05" fill="#d0d0d0"/><rect x="0" y="21" width="3" height="1.05" fill="#d0d0d0"/><rect x="3" y="21" width="3" height="1.05" fill="#969696"/><rect x="6" y="21" width="38" height="1.05" fill="#d0d0d0"/><rect x="44" y="21" width="3" height="1.05" fill="#969696"/><rect x="47" y="21" width="3" height="1.05" fill="#d0d0d0"/><rect x="0" y="22" width="3" height="1.05" fill="#d0d0d0"/><rect x="3" y="22" width="2" height="1.05" fill="#969696"/><rect x="5" y="22" width="39" height="1.05" fill="#d0d0d0"/><rect x="44" y="22" width="4" height="1.05" fill="#969696"/><rect x="48" y="22" width="2" height="1.05" fill="#d0d0d0"/><rect x="0" y="23" width="3" height="1.05" fill="#d0d0d0"/><rect x="3" y="23" width="2" height="1.05" fill="#969696"/><rect x="5" y="23" width="13" height="1.05" fill="#d0d0d0"/><rect x="18" y="23" width="1" height="1.05" fill="#ffffff"/><rect x="19" y="23" width="26" height="1.05" fill="#d0d0d0"/><rect x="45" y="23" width="3" height="1.05" fill="#969696"/><rect x="48" y="23" width="2" height="1.05" fill="#d0d0d0"/><rect x="0" y="24" width="2" height="1.05" fill="#d0d0d0"/><rect x="2" y="24" width="3" height="1.05" fill="#969696"/><rect x="5" y="24" width="12" height="1.05" fill="#d0d0d0"/><rect x="17" y="24" width="2" height="1.05" fill="#ffffff"/><rect x="19" y="24" width="26" height="1.05" fill="#d0d0d0"/><rect x="45" y="24" width="3" height="1.05" fill="#969696"/><rect x="48" y="24" width="2" height="1.05" fill="#d0d0d0"/><rect x="0" y="25" width="2" height="1.05" fill="#d0d0d0"/><rect x="2" y="25" width="2" height="1.05" fill="#969696"/><rect x="4" y="25" width="11" height="1.05" fill="#d0d0d0"/><rect x="15" y="25" width="5" height="1.05" fill="#ffffff"/><rect x="20" y="25" width="9" height="1.05" fill="#d0d0d0"/><rect x="29" y="25" width="6" height="1.05" fill="#ffffff"/><rect x="35" y="25" width="11" height="1.05" fill="#d0d0d0"/><rect x="46" y="25" width="4" height="1.05" fill="#969696"/><rect x="0" y="26" width="3" height="1.05" fill="#969696"/><rect x="3" y="26" width="13" height="1.05" fill="#d0d0d0"/><rect x="16" y="26" width="6" height="1.05" fill="#ffffff"/><rect x="22" y="26" width="5" height="1.05" fill="#d0d0d0"/><rect x="27" y="26" width="4" height="1.05" fill="#ffffff"/><rect x="31" y="26" width="16" height="1.05" fill="#d0d0d0"/><rect x="47" y="26" width="3" height="1.05" fill="#969696"/><rect x="0" y="27" width="2" height="1.05" fill="#969696"/><rect x="2" y="27" width="3" height="1.05" fill="#d0d0d0"/><rect x="5" y="27" width="1" height="1.05" fill="#969696"/><rect x="6" y="27" width="9" height="1.05" fill="#d0d0d0"/><rect x="15" y="27" width="6" height="1.05" fill="#ffffff"/><rect x="21" y="27" width="1" height="1.05" fill="#dcdcdc"/><rect x="22" y="27" width="4" height="1.05" fill="#d0d0d0"/><rect x="26" y="27" width="7" height="1.05" fill="#ffffff"/><rect x="33" y="27" width="14" height="1.05" fill="#d0d0d0"/><rect x="47" y="27" width="3" height="1.05" fill="#969696"/><rect x="0" y="28" width="6" height="1.05" fill="#969696"/><rect x="6" y="28" width="7" height="1.05" fill="#d0d0d0"/><rect x="13" y="28" width="9" height="1.05" fill="#ffffff"/><rect x="22" y="28" width="4" height="1.05" fill="#d0d0d0"/><rect x="26" y="28" width="9" height="1.05" fill="#ffffff"/><rect x="35" y="28" width="1" height="1.05" fill="#d0d0d0"/><rect x="36" y="28" width="1" height="1.05" fill="#ffffff"/><rect x="37" y="28" width="7" height="1.05" fill="#d0d0d0"/><rect x="44" y="28" width="1" height="1.05" fill="#969696"/><rect x="45" y="28" width="3" height="1.05" fill="#d0d0d0"/><rect x="48" y="28" width="2" height="1.05" fill="#969696"/><rect x="0" y="29" width="6" height="1.05" fill="#969696"/><rect x="6" y="29" width="7" height="1.05" fill="#d0d0d0"/><rect x="13" y="29" width="10" height="1.05" fill="#ffffff"/><rect x="23" y="29" width="4" height="1.05" fill="#d0d0d0"/><rect x="27" y="29" width="10" height="1.05" fill="#ffffff"/><rect x="37" y="29" width="7" height="1.05" fill="#d0d0d0"/><rect x="44" y="29" width="2" height="1.05" fill="#969696"/><rect x="46" y="29" width="2" height="1.05" fill="#d0d0d0"/><rect x="48" y="29" width="2" height="1.05" fill="#969696"/><rect x="0" y="30" width="6" height="1.05" fill="#969696"/><rect x="6" y="30" width="7" height="1.05" fill="#d0d0d0"/><rect x="13" y="30" width="11" height="1.05" fill="#ffffff"/><rect x="24" y="30" width="3" height="1.05" fill="#d0d0d0"/><rect x="27" y="30" width="10" height="1.05" fill="#ffffff"/><rect x="37" y="30" width="7" height="1.05" fill="#d0d0d0"/><rect x="44" y="30" width="3" height="1.05" fill="#969696"/><rect x="47" y="30" width="3" height="1.05" fill="#d0d0d0"/><rect x="0" y="31" width="6" height="1.05" fill="#969696"/><rect x="6" y="31" width="7" height="1.05" fill="#d0d0d0"/><rect x="13" y="31" width="12" height="1.05" fill="#ffffff"/><rect x="25" y="31" width="2" height="1.05" fill="#d0d0d0"/><rect x="27" y="31" width="10" height="1.05" fill="#ffffff"/><rect x="37" y="31" width="7" height="1.05" fill="#d0d0d0"/><rect x="44" y="31" width="6" height="1.05" fill="#969696"/><rect x="0" y="32" width="6" height="1.05" fill="#969696"/><rect x="6" y="32" width="7" height="1.05" fill="#d0d0d0"/><rect x="13" y="32" width="23" height="1.05" fill="#ffffff"/><rect x="36" y="32" width="8" height="1.05" fill="#d0d0d0"/><rect x="44" y="32" width="6" height="1.05" fill="#969696"/><rect x="0" y="33" width="6" height="1.05" fill="#969696"/><rect x="6" y="33" width="7" height="1.05" fill="#d0d0d0"/><rect x="13" y="33" width="22" height="1.05" fill="#ffffff"/><rect x="35" y="33" width="8" height="1.05" fill="#d0d0d0"/><rect x="43" y="33" width="7" height="1.05" fill="#969696"/><rect x="0" y="34" width="6" height="1.05" fill="#969696"/><rect x="6" y="34" width="8" height="1.05" fill="#d0d0d0"/><rect x="14" y="34" width="21" height="1.05" fill="#ffffff"/><rect x="35" y="34" width="8" height="1.05" fill="#d0d0d0"/><rect x="43" y="34" width="7" height="1.05" fill="#969696"/><rect x="0" y="35" width="5" height="1.05" fill="#969696"/><rect x="5" y="35" width="1" height="1.05" fill="#dcdcdc"/><rect x="6" y="35" width="2" height="1.05" fill="#969696"/><rect x="8" y="35" width="6" height="1.05" fill="#d0d0d0"/><rect x="14" y="35" width="21" height="1.05" fill="#ffffff"/><rect x="35" y="35" width="9" height="1.05" fill="#d0d0d0"/><rect x="44" y="35" width="6" height="1.05" fill="#969696"/><rect x="0" y="36" width="5" height="1.05" fill="#969696"/><rect x="5" y="36" width="1" height="1.05" fill="#dcdcdc"/><rect x="6" y="36" width="2" height="1.05" fill="#969696"/><rect x="8" y="36" width="6" height="1.05" fill="#d0d0d0"/><rect x="14" y="36" width="20" height="1.05" fill="#ffffff"/><rect x="34" y="36" width="11" height="1.05" fill="#d0d0d0"/><rect x="45" y="36" width="5" height="1.05" fill="#969696"/><rect x="0" y="37" width="5" height="1.05" fill="#969696"/><rect x="5" y="37" width="1" height="1.05" fill="#dcdcdc"/><rect x="6" y="37" width="2" height="1.05" fill="#969696"/><rect x="8" y="37" width="7" height="1.05" fill="#d0d0d0"/><rect x="15" y="37" width="19" height="1.05" fill="#ffffff"/><rect x="34" y="37" width="10" height="1.05" fill="#d0d0d0"/><rect x="44" y="37" width="6" height="1.05" fill="#969696"/><rect x="0" y="38" width="4" height="1.05" fill="#969696"/><rect x="4" y="38" width="1" height="1.05" fill="#dcdcdc"/><rect x="5" y="38" width="3" height="1.05" fill="#969696"/><rect x="8" y="38" width="8" height="1.05" fill="#d0d0d0"/><rect x="16" y="38" width="17" height="1.05" fill="#ffffff"/><rect x="33" y="38" width="3" height="1.05" fill="#d0d0d0"/><rect x="36" y="38" width="1" height="1.05" fill="#ffffff"/><rect x="37" y="38" width="6" height="1.05" fill="#d0d0d0"/><rect x="43" y="38" width="1" height="1.05" fill="#969696"/><rect x="44" y="38" width="1" height="1.05" fill="#dcdcdc"/><rect x="45" y="38" width="5" height="1.05" fill="#969696"/><rect x="0" y="39" width="4" height="1.05" fill="#969696"/><rect x="4" y="39" width="1" height="1.05" fill="#dcdcdc"/><rect x="5" y="39" width="4" height="1.05" fill="#969696"/><rect x="9" y="39" width="8" height="1.05" fill="#d0d0d0"/><rect x="17" y="39" width="15" height="1.05" fill="#ffffff"/><rect x="32" y="39" width="11" height="1.05" fill="#d0d0d0"/><rect x="43" y="39" width="1" height="1.05" fill="#969696"/><rect x="44" y="39" width="1" height="1.05" fill="#dcdcdc"/><rect x="45" y="39" width="5" height="1.05" fill="#969696"/><rect x="0" y="40" width="4" height="1.05" fill="#969696"/><rect x="4" y="40" width="1" height="1.05" fill="#dcdcdc"/><rect x="5" y="40" width="5" height="1.05" fill="#969696"/><rect x="10" y="40" width="8" height="1.05" fill="#d0d0d0"/><rect x="18" y="40" width="13" height="1.05" fill="#ffffff"/><rect x="31" y="40" width="12" height="1.05" fill="#d0d0d0"/><rect x="43" y="40" width="2" height="1.05" fill="#969696"/><rect x="45" y="40" width="1" height="1.05" fill="#dcdcdc"/><rect x="46" y="40" width="4" height="1.05" fill="#969696"/><rect x="0" y="41" width="4" height="1.05" fill="#969696"/><rect x="4" y="41" width="1" height="1.05" fill="#dcdcdc"/><rect x="5" y="41" width="5" height="1.05" fill="#969696"/><rect x="10" y="41" width="10" height="1.05" fill="#d0d0d0"/><rect x="20" y="41" width="10" height="1.05" fill="#ffffff"/><rect x="30" y="41" width="10" height="1.05" fill="#d0d0d0"/><rect x="42" y="41" width="1" height="1.05" fill="#dcdcdc"/><rect x="43" y="41" width="2" height="1.05" fill="#969696"/><rect x="45" y="41" width="1" height="1.05" fill="#dcdcdc"/><rect x="46" y="41" width="4" height="1.05" fill="#969696"/><rect x="0" y="42" width="5" height="1.05" fill="#969696"/><rect x="5" y="42" width="1" height="1.05" fill="#dcdcdc"/><rect x="6" y="42" width="4" height="1.05" fill="#969696"/><rect x="10" y="42" width="9" height="1.05" fill="#d0d0d0"/><rect x="19" y="42" width="1" height="1.05" fill="#969696"/><rect x="20" y="42" width="2" height="1.05" fill="#dcdcdc"/><rect x="22" y="42" width="6" height="1.05" fill="#ffffff"/><rect x="28" y="42" width="2" height="1.05" fill="#dcdcdc"/><rect x="30" y="42" width="1" height="1.05" fill="#969696"/><rect x="31" y="42" width="9" height="1.05" fill="#d0d0d0"/><rect x="41" y="42" width="1" height="1.05" fill="#dcdcdc"/><rect x="42" y="42" width="3" height="1.05" fill="#969696"/><rect x="45" y="42" width="1" height="1.05" fill="#dcdcdc"/><rect x="46" y="42" width="4" height="1.05" fill="#969696"/><rect x="0" y="43" width="6" height="1.05" fill="#969696"/><rect x="6" y="43" width="1" height="1.05" fill="#dcdcdc"/><rect x="7" y="43" width="4" height="1.05" fill="#969696"/><rect x="11" y="43" width="8" height="1.05" fill="#d0d0d0"/><rect x="19" y="43" width="3" height="1.05" fill="#5f5f5f"/><rect x="22" y="43" width="6" height="1.05" fill="#dcdcdc"/><rect x="28" y="43" width="3" height="1.05" fill="#5f5f5f"/><rect x="31" y="43" width="2" height="1.05" fill="#d0d0d0"/><rect x="33" y="43" width="1" height="1.05" fill="#5f5f5f"/><rect x="34" y="43" width="5" height="1.05" fill="#d0d0d0"/><rect x="41" y="43" width="1" height="1.05" fill="#dcdcdc"/><rect x="42" y="43" width="2" height="1.05" fill="#969696"/><rect x="44" y="43" width="1" height="1.05" fill="#dcdcdc"/><rect x="45" y="43" width="5" height="1.05" fill="#969696"/><rect x="0" y="44" width="11" height="1.05" fill="#969696"/><rect x="11" y="44" width="8" height="1.05" fill="#d0d0d0"/><rect x="19" y="44" width="12" height="1.05" fill="#5f5f5f"/><rect x="31" y="44" width="1" height="1.05" fill="#d0d0d0"/><rect x="32" y="44" width="2" height="1.05" fill="#5f5f5f"/><rect x="34" y="44" width="4" height="1.05" fill="#d0d0d0"/><rect x="40" y="44" width="2" height="1.05" fill="#dcdcdc"/><rect x="42" y="44" width="2" height="1.05" fill="#969696"/><rect x="44" y="44" width="1" height="1.05" fill="#dcdcdc"/><rect x="45" y="44" width="5" height="1.05" fill="#969696"/><rect x="0" y="45" width="11" height="1.05" fill="#969696"/><rect x="11" y="45" width="6" height="1.05" fill="#d0d0d0"/><rect x="17" y="45" width="1" height="1.05" fill="#5f5f5f"/><rect x="18" y="45" width="2" height="1.05" fill="#d0d0d0"/><rect x="20" y="45" width="13" height="1.05" fill="#5f5f5f"/><rect x="33" y="45" width="5" height="1.05" fill="#d0d0d0"/><rect x="40" y="45" width="1" height="1.05" fill="#dcdcdc"/><rect x="41" y="45" width="2" height="1.05" fill="#969696"/><rect x="43" y="45" width="1" height="1.05" fill="#dcdcdc"/><rect x="44" y="45" width="6" height="1.05" fill="#969696"/><rect x="0" y="46" width="11" height="1.05" fill="#969696"/><rect x="11" y="46" width="5" height="1.05" fill="#d0d0d0"/><rect x="16" y="46" width="17" height="1.05" fill="#5f5f5f"/><rect x="33" y="46" width="3" height="1.05" fill="#d0d0d0"/><rect x="36" y="46" width="1" height="1.05" fill="#5f5f5f"/><rect x="37" y="46" width="1" height="1.05" fill="#d0d0d0"/><rect x="39" y="46" width="2" height="1.05" fill="#dcdcdc"/><rect x="41" y="46" width="9" height="1.05" fill="#969696"/><rect x="0" y="47" width="10" height="1.05" fill="#969696"/><rect x="10" y="47" width="1" height="1.05" fill="#dcdcdc"/><rect x="13" y="47" width="18" height="1.05" fill="#5f5f5f"/><rect x="31" y="47" width="5" height="1.05" fill="#d0d0d0"/><rect x="36" y="47" width="1" height="1.05" fill="#5f5f5f"/><rect x="37" y="47" width="1" height="1.05" fill="#d0d0d0"/><rect x="39" y="47" width="1" height="1.05" fill="#dcdcdc"/><rect x="40" y="47" width="10" height="1.05" fill="#969696"/><rect x="0" y="48" width="10" height="1.05" fill="#969696"/><rect x="10" y="48" width="1" height="1.05" fill="#dcdcdc"/><rect x="11" y="48" width="1" height="1.05" fill="#969696"/><rect x="12" y="48" width="19" height="1.05" fill="#5f5f5f"/><rect x="31" y="48" width="4" height="1.05" fill="#d0d0d0"/><rect x="35" y="48" width="2" height="1.05" fill="#5f5f5f"/><rect x="37" y="48" width="2" height="1.05" fill="#dcdcdc"/><rect x="39" y="48" width="11" height="1.05" fill="#969696"/><rect x="0" y="49" width="10" height="1.05" fill="#969696"/><rect x="10" y="49" width="1" height="1.05" fill="#dcdcdc"/><rect x="11" y="49" width="1" height="1.05" fill="#969696"/><rect x="12" y="49" width="19" height="1.05" fill="#5f5f5f"/><rect x="31" y="49" width="4" height="1.05" fill="#d0d0d0"/><rect x="35" y="49" width="2" height="1.05" fill="#5f5f5f"/><rect x="37" y="49" width="2" height="1.05" fill="#dcdcdc"/><rect x="39" y="49" width="11" height="1.05" fill="#969696"/></g></defs></svg>
<svg style="left:0;top:1px" width="331" height="93" viewBox="0 0 331 93"><use href="#th" transform="translate(0,45.5) scale(0.92)"/><use href="#th" transform="translate(46,45.5) scale(0.92)"/><use href="#th" transform="translate(92,45.5) scale(0.92)"/><use href="#th" transform="translate(138,45.5) scale(0.92)"/><use href="#th" transform="translate(184,45.5) scale(0.92)"/><use href="#th" transform="translate(230,45.5) scale(0.92)"/><use href="#th" transform="translate(276,45.5) scale(0.92)"/><use href="#th" transform="translate(322,45.5) scale(0.92)"/><g shape-rendering="crispEdges"><rect x="12" y="15" width="3" height="1" fill="#a494a4"/><rect x="15" y="16" width="4" height="1" fill="#a494a4"/><rect x="26" y="16" width="5" height="1" fill="#a494a4"/><rect x="31" y="15" width="3" height="1" fill="#a494a4"/><rect x="12" y="17" width="8" height="2" fill="#444444"/><rect x="12" y="19" width="1" height="2" fill="#444444"/><rect x="26" y="17" width="8" height="2" fill="#444444"/><rect x="33" y="19" width="1" height="2" fill="#444444"/><rect x="14" y="18" width="5" height="4" fill="#ffa200"/><rect x="15" y="22" width="3" height="1" fill="#ffa200"/><rect x="27" y="18" width="5" height="4" fill="#f0148c"/><rect x="28" y="22" width="3" height="1" fill="#f0148c"/><rect x="16" y="17" width="1" height="2" fill="#444444"/><rect x="30" y="17" width="1" height="2" fill="#444444"/><rect x="16" y="20" width="1" height="2" fill="#c87800"/><rect x="30" y="20" width="1" height="2" fill="#b00060"/><rect x="19" y="28" width="1" height="1" fill="#444444"/><rect x="26" y="28" width="1" height="1" fill="#444444"/><rect x="20" y="29" width="6" height="1" fill="#444444"/></g><g shape-rendering="crispEdges"><rect x="58" y="15" width="3" height="1" fill="#a494a4"/><rect x="61" y="16" width="4" height="1" fill="#a494a4"/><rect x="72" y="16" width="5" height="1" fill="#a494a4"/><rect x="77" y="15" width="3" height="1" fill="#a494a4"/><rect x="58" y="20" width="8" height="2" fill="#444444"/><rect x="72" y="17" width="8" height="2" fill="#444444"/><rect x="79" y="19" width="1" height="2" fill="#444444"/><rect x="73" y="18" width="5" height="4" fill="#f0148c"/><rect x="74" y="22" width="3" height="1" fill="#f0148c"/><rect x="76" y="17" width="1" height="2" fill="#444444"/><rect x="65" y="28" width="1" height="1" fill="#444444"/><rect x="72" y="28" width="1" height="1" fill="#444444"/><rect x="66" y="29" width="6" height="1" fill="#444444"/></g><g shape-rendering="crispEdges"><rect x="104" y="15" width="3" height="1" fill="#a494a4"/><rect x="107" y="16" width="4" height="1" fill="#a494a4"/><rect x="118" y="16" width="5" height="1" fill="#a494a4"/><rect x="123" y="15" width="3" height="1" fill="#a494a4"/><rect x="104" y="17" width="8" height="2" fill="#444444"/><rect x="104" y="19" width="1" height="2" fill="#444444"/><rect x="118" y="17" width="8" height="2" fill="#444444"/><rect x="125" y="19" width="1" height="2" fill="#444444"/><rect x="106" y="18" width="5" height="4" fill="#ffa200"/><rect x="107" y="22" width="3" height="1" fill="#ffa200"/><rect x="119" y="18" width="5" height="4" fill="#f0148c"/><rect x="120" y="22" width="3" height="1" fill="#f0148c"/><rect x="108" y="17" width="1" height="2" fill="#444444"/><rect x="122" y="17" width="1" height="2" fill="#444444"/><rect x="108" y="20" width="1" height="2" fill="#c87800"/><rect x="122" y="20" width="1" height="2" fill="#b00060"/><rect x="111" y="28" width="7" height="1" fill="#444444"/><rect x="117" y="27" width="1" height="1" fill="#444444"/><rect x="113" y="29" width="5" height="1" fill="#fff"/></g><g shape-rendering="crispEdges"><rect x="151" y="15" width="6" height="1" fill="#5a5a5a"/><rect x="150" y="16" width="2" height="1" fill="#5a5a5a"/><rect x="165" y="15" width="6" height="1" fill="#5a5a5a"/><rect x="170" y="16" width="2" height="1" fill="#5a5a5a"/><rect x="150" y="20" width="8" height="2" fill="#444444"/><rect x="164" y="20" width="8" height="2" fill="#444444"/><rect x="157" y="28" width="1" height="1" fill="#444444"/><rect x="164" y="28" width="1" height="1" fill="#444444"/><rect x="158" y="29" width="6" height="1" fill="#444444"/></g><g transform="translate(181.8,-5) scale(0.99)" shape-rendering="crispEdges"><rect x="11" y="14" width="1.05" height="1.05" fill="#ffe63a"/><rect x="11" y="15" width="1.05" height="1.05" fill="#ffe63a"/><rect x="11" y="16" width="1.05" height="1.05" fill="#ffe63a"/><rect x="10" y="17" width="1.05" height="1.05" fill="#ffe63a"/><rect x="11" y="17" width="1.05" height="1.05" fill="#ffe63a"/><rect x="6" y="18" width="1.05" height="1.05" fill="#555555"/><rect x="7" y="18" width="1.05" height="1.05" fill="#ffe63a"/><rect x="8" y="18" width="1.05" height="1.05" fill="#ffe63a"/><rect x="9" y="18" width="1.05" height="1.05" fill="#ffe63a"/><rect x="10" y="18" width="1.05" height="1.05" fill="#ffe63a"/><rect x="11" y="18" width="1.05" height="1.05" fill="#ffe63a"/><rect x="12" y="18" width="1.05" height="1.05" fill="#ffe63a"/><rect x="6" y="19" width="1.05" height="1.05" fill="#555555"/><rect x="8" y="19" width="1.05" height="1.05" fill="#ffe63a"/><rect x="9" y="19" width="1.05" height="1.05" fill="#ffe63a"/><rect x="10" y="19" width="1.05" height="1.05" fill="#ffe63a"/><rect x="11" y="19" width="1.05" height="1.05" fill="#ffe63a"/><rect x="12" y="19" width="1.05" height="1.05" fill="#ffe63a"/><rect x="13" y="19" width="1.05" height="1.05" fill="#ffe63a"/><rect x="14" y="19" width="1.05" height="1.05" fill="#ffe63a"/><rect x="15" y="19" width="1.05" height="1.05" fill="#ffe63a"/><rect x="9" y="20" width="1.05" height="1.05" fill="#ffe63a"/><rect x="10" y="20" width="1.05" height="1.05" fill="#ffe63a"/><rect x="11" y="20" width="1.05" height="1.05" fill="#ffe63a"/><rect x="10" y="21" width="1.05" height="1.05" fill="#ffe63a"/><rect x="10" y="22" width="1.05" height="1.05" fill="#ffe63a"/><rect x="15" y="25" width="1.05" height="1.05" fill="#969696"/><rect x="16" y="25" width="1.05" height="1.05" fill="#969696"/><rect x="17" y="25" width="1.05" height="1.05" fill="#969696"/><rect x="18" y="25" width="1.05" height="1.05" fill="#969696"/><rect x="30" y="25" width="1.05" height="1.05" fill="#969696"/><rect x="31" y="25" width="1.05" height="1.05" fill="#969696"/><rect x="32" y="25" width="1.05" height="1.05" fill="#969696"/><rect x="33" y="25" width="1.05" height="1.05" fill="#969696"/><rect x="34" y="25" width="1.05" height="1.05" fill="#969696"/><rect x="19" y="26" width="1.05" height="1.05" fill="#969696"/><rect x="20" y="26" width="1.05" height="1.05" fill="#969696"/><rect x="21" y="26" width="1.05" height="1.05" fill="#969696"/><rect x="27" y="26" width="1.05" height="1.05" fill="#969696"/><rect x="28" y="26" width="1.05" height="1.05" fill="#969696"/><rect x="29" y="26" width="1.05" height="1.05" fill="#969696"/><rect x="17" y="27" width="1.05" height="1.05" fill="#444444"/><rect x="32" y="27" width="1.05" height="1.05" fill="#444444"/><rect x="13" y="28" width="1.05" height="1.05" fill="#444444"/><rect x="15" y="28" width="1.05" height="1.05" fill="#444444"/><rect x="16" y="28" width="1.05" height="1.05" fill="#444444"/><rect x="17" y="28" width="1.05" height="1.05" fill="#444444"/><rect x="18" y="28" width="1.05" height="1.05" fill="#444444"/><rect x="31" y="28" width="1.05" height="1.05" fill="#444444"/><rect x="32" y="28" width="1.05" height="1.05" fill="#444444"/><rect x="33" y="28" width="1.05" height="1.05" fill="#444444"/><rect x="34" y="28" width="1.05" height="1.05" fill="#444444"/><rect x="36" y="28" width="1.05" height="1.05" fill="#444444"/><rect x="13" y="29" width="1.05" height="1.05" fill="#444444"/><rect x="14" y="29" width="1.05" height="1.05" fill="#444444"/><rect x="15" y="29" width="1.05" height="1.05" fill="#444444"/><rect x="16" y="29" width="1.05" height="1.05" fill="#444444"/><rect x="17" y="29" width="1.05" height="1.05" fill="#a05a00"/><rect x="18" y="29" width="1.05" height="1.05" fill="#a05a00"/><rect x="19" y="29" width="1.05" height="1.05" fill="#444444"/><rect x="20" y="29" width="1.05" height="1.05" fill="#444444"/><rect x="29" y="29" width="1.05" height="1.05" fill="#444444"/><rect x="30" y="29" width="1.05" height="1.05" fill="#444444"/><rect x="31" y="29" width="1.05" height="1.05" fill="#900040"/><rect x="32" y="29" width="1.05" height="1.05" fill="#900040"/><rect x="33" y="29" width="1.05" height="1.05" fill="#444444"/><rect x="34" y="29" width="1.05" height="1.05" fill="#444444"/><rect x="35" y="29" width="1.05" height="1.05" fill="#444444"/><rect x="36" y="29" width="1.05" height="1.05" fill="#444444"/><rect x="13" y="30" width="1.05" height="1.05" fill="#444444"/><rect x="15" y="30" width="1.05" height="1.05" fill="#ffd080"/><rect x="16" y="30" width="1.05" height="1.05" fill="#ffd080"/><rect x="17" y="30" width="1.05" height="1.05" fill="#ffa200"/><rect x="18" y="30" width="1.05" height="1.05" fill="#ffe4c0"/><rect x="19" y="30" width="1.05" height="1.05" fill="#a05a00"/><rect x="20" y="30" width="1.05" height="1.05" fill="#444444"/><rect x="21" y="30" width="1.05" height="1.05" fill="#444444"/><rect x="28" y="30" width="1.05" height="1.05" fill="#444444"/><rect x="29" y="30" width="1.05" height="1.05" fill="#ff7ab8"/><rect x="30" y="30" width="1.05" height="1.05" fill="#ff7ab8"/><rect x="31" y="30" width="1.05" height="1.05" fill="#ffb0e0"/><rect x="32" y="30" width="1.05" height="1.05" fill="#f0148c"/><rect x="33" y="30" width="1.05" height="1.05" fill="#f0148c"/><rect x="34" y="30" width="1.05" height="1.05" fill="#f0148c"/><rect x="35" y="30" width="1.05" height="1.05" fill="#444444"/><rect x="36" y="30" width="1.05" height="1.05" fill="#444444"/><rect x="13" y="31" width="1.05" height="1.05" fill="#444444"/><rect x="15" y="31" width="1.05" height="1.05" fill="#ffa200"/><rect x="16" y="31" width="1.05" height="1.05" fill="#ffa200"/><rect x="17" y="31" width="1.05" height="1.05" fill="#ffe4c0"/><rect x="18" y="31" width="1.05" height="1.05" fill="#ffe4c0"/><rect x="19" y="31" width="1.05" height="1.05" fill="#ffe4c0"/><rect x="20" y="31" width="1.05" height="1.05" fill="#ffa200"/><rect x="29" y="31" width="1.05" height="1.05" fill="#f0148c"/><rect x="30" y="31" width="1.05" height="1.05" fill="#ffb0e0"/><rect x="31" y="31" width="1.05" height="1.05" fill="#ffb0e0"/><rect x="32" y="31" width="1.05" height="1.05" fill="#ffb0e0"/><rect x="33" y="31" width="1.05" height="1.05" fill="#f0148c"/><rect x="34" y="31" width="1.05" height="1.05" fill="#f0148c"/><rect x="36" y="31" width="1.05" height="1.05" fill="#444444"/><rect x="15" y="32" width="1.05" height="1.05" fill="#ffa200"/><rect x="16" y="32" width="1.05" height="1.05" fill="#ffa200"/><rect x="17" y="32" width="1.05" height="1.05" fill="#ffa200"/><rect x="18" y="32" width="1.05" height="1.05" fill="#ffe4c0"/><rect x="19" y="32" width="1.05" height="1.05" fill="#ffa200"/><rect x="20" y="32" width="1.05" height="1.05" fill="#ffa200"/><rect x="29" y="32" width="1.05" height="1.05" fill="#f0148c"/><rect x="30" y="32" width="1.05" height="1.05" fill="#f0148c"/><rect x="31" y="32" width="1.05" height="1.05" fill="#ffb0e0"/><rect x="32" y="32" width="1.05" height="1.05" fill="#f0148c"/><rect x="33" y="32" width="1.05" height="1.05" fill="#f0148c"/><rect x="16" y="33" width="1.05" height="1.05" fill="#ffa200"/><rect x="17" y="33" width="1.05" height="1.05" fill="#ffa200"/><rect x="18" y="33" width="1.05" height="1.05" fill="#ffa200"/><rect x="19" y="33" width="1.05" height="1.05" fill="#ffa200"/><rect x="30" y="33" width="1.05" height="1.05" fill="#f0148c"/><rect x="31" y="33" width="1.05" height="1.05" fill="#f0148c"/><rect x="32" y="33" width="1.05" height="1.05" fill="#f0148c"/><rect x="38" y="33" width="1.05" height="1.05" fill="#ffe63a"/><rect x="39" y="34" width="1.05" height="1.05" fill="#ffe63a"/><rect x="39" y="35" width="1.05" height="1.05" fill="#ffe63a"/><rect x="40" y="35" width="1.05" height="1.05" fill="#ffe63a"/><rect x="41" y="35" width="1.05" height="1.05" fill="#ffe63a"/><rect x="39" y="36" width="1.05" height="1.05" fill="#ffe63a"/><rect x="40" y="36" width="1.05" height="1.05" fill="#ffe63a"/><rect x="41" y="36" width="1.05" height="1.05" fill="#ffe63a"/><rect x="42" y="36" width="1.05" height="1.05" fill="#ffe63a"/><rect x="43" y="36" width="1.05" height="1.05" fill="#ffe63a"/><rect x="44" y="36" width="1.05" height="1.05" fill="#ffe63a"/><rect x="38" y="37" width="1.05" height="1.05" fill="#ffe63a"/><rect x="39" y="37" width="1.05" height="1.05" fill="#ffe63a"/><rect x="40" y="37" width="1.05" height="1.05" fill="#ffe63a"/><rect x="41" y="37" width="1.05" height="1.05" fill="#ffe63a"/><rect x="42" y="37" width="1.05" height="1.05" fill="#ffe63a"/><rect x="43" y="37" width="1.05" height="1.05" fill="#ffe63a"/><rect x="21" y="38" width="1.05" height="1.05" fill="#444444"/><rect x="22" y="38" width="1.05" height="1.05" fill="#444444"/><rect x="23" y="38" width="1.05" height="1.05" fill="#444444"/><rect x="24" y="38" width="1.05" height="1.05" fill="#444444"/><rect x="25" y="38" width="1.05" height="1.05" fill="#444444"/><rect x="26" y="38" width="1.05" height="1.05" fill="#444444"/><rect x="27" y="38" width="1.05" height="1.05" fill="#444444"/><rect x="28" y="38" width="1.05" height="1.05" fill="#444444"/><rect x="36" y="38" width="1.05" height="1.05" fill="#ffe63a"/><rect x="37" y="38" width="1.05" height="1.05" fill="#ffe63a"/><rect x="38" y="38" width="1.05" height="1.05" fill="#ffe63a"/><rect x="39" y="38" width="1.05" height="1.05" fill="#ffe63a"/><rect x="40" y="38" width="1.05" height="1.05" fill="#ffe63a"/><rect x="41" y="38" width="1.05" height="1.05" fill="#ffe63a"/><rect x="42" y="38" width="1.05" height="1.05" fill="#ffe63a"/><rect x="21" y="39" width="1.05" height="1.05" fill="#444444"/><rect x="22" y="39" width="1.05" height="1.05" fill="#444444"/><rect x="23" y="39" width="1.05" height="1.05" fill="#444444"/><rect x="24" y="39" width="1.05" height="1.05" fill="#444444"/><rect x="25" y="39" width="1.05" height="1.05" fill="#444444"/><rect x="26" y="39" width="1.05" height="1.05" fill="#444444"/><rect x="27" y="39" width="1.05" height="1.05" fill="#444444"/><rect x="28" y="39" width="1.05" height="1.05" fill="#444444"/><rect x="39" y="39" width="1.05" height="1.05" fill="#ffe63a"/><rect x="40" y="39" width="1.05" height="1.05" fill="#ffe63a"/><rect x="41" y="39" width="1.05" height="1.05" fill="#ffe63a"/><rect x="42" y="39" width="1.05" height="1.05" fill="#ffe63a"/><rect x="22" y="40" width="1.05" height="1.05" fill="#444444"/><rect x="23" y="40" width="1.05" height="1.05" fill="#444444"/><rect x="24" y="40" width="1.05" height="1.05" fill="#444444"/><rect x="25" y="40" width="1.05" height="1.05" fill="#444444"/><rect x="26" y="40" width="1.05" height="1.05" fill="#444444"/><rect x="27" y="40" width="1.05" height="1.05" fill="#444444"/><rect x="41" y="40" width="1.05" height="1.05" fill="#ffe63a"/><rect x="42" y="40" width="1.05" height="1.05" fill="#ffe63a"/></g><g shape-rendering="crispEdges"><rect x="243" y="16" width="4" height="1" fill="#a494a4"/><rect x="247" y="15" width="2" height="1" fill="#a494a4"/><rect x="257" y="15" width="3" height="1" fill="#a494a4"/><rect x="259" y="16" width="4" height="1" fill="#a494a4"/><rect x="242" y="19" width="8" height="2" fill="#444444"/><rect x="256" y="19" width="8" height="2" fill="#444444"/><rect x="243" y="21" width="2" height="6" fill="#3a8bff"/><rect x="261" y="21" width="2" height="6" fill="#3a8bff"/><rect x="251" y="27" width="4" height="1" fill="#444444"/><rect x="249" y="28" width="2" height="1" fill="#444444"/><rect x="255" y="28" width="1" height="1" fill="#444444"/></g><g shape-rendering="crispEdges"><rect x="289" y="16" width="4" height="1" fill="#a494a4"/><rect x="293" y="15" width="2" height="1" fill="#a494a4"/><rect x="303" y="15" width="3" height="1" fill="#a494a4"/><rect x="305" y="16" width="4" height="1" fill="#a494a4"/><rect x="288" y="17" width="8" height="2" fill="#444444"/><rect x="288" y="19" width="1" height="2" fill="#444444"/><rect x="302" y="17" width="8" height="2" fill="#444444"/><rect x="309" y="19" width="1" height="2" fill="#444444"/><rect x="290" y="18" width="5" height="4" fill="#ffa200"/><rect x="291" y="22" width="3" height="1" fill="#ffa200"/><rect x="303" y="18" width="5" height="4" fill="#f0148c"/><rect x="304" y="22" width="3" height="1" fill="#f0148c"/><rect x="292" y="17" width="1" height="2" fill="#444444"/><rect x="306" y="17" width="1" height="2" fill="#444444"/><rect x="292" y="20" width="1" height="2" fill="#c87800"/><rect x="306" y="20" width="1" height="2" fill="#b00060"/><rect x="296" y="28" width="6" height="1" fill="#444444"/><rect x="297" y="29" width="4" height="1" fill="#444444"/><rect x="305" y="26" width="2" height="2" fill="#3a8bff"/></g></svg>
</div>
<div class="abs" style="left:580px;top:469px;width:47px;height:47px;border:1px solid #b0a8b0"></div>
<div class="abs" style="left:399px;top:557px;width:176px;height:5px;background:#6e6e6e;"></div>
<div class="abs" style="left:396px;top:562px;width:331px;height:2px;background:#067006;"></div>
<div class="abs" style="left:396px;top:562px;width:1px;height:2px;background:#043c04;"></div>
<div class="abs" style="left:441px;top:562px;width:2px;height:2px;background:#043c04;"></div>
<div class="abs" style="left:487px;top:562px;width:2px;height:2px;background:#043c04;"></div>
<div class="abs" style="left:533px;top:562px;width:2px;height:2px;background:#043c04;"></div>
<div class="abs" style="left:579px;top:562px;width:2px;height:2px;background:#043c04;"></div>
<div class="abs" style="left:625px;top:562px;width:2px;height:2px;background:#043c04;"></div>
<div class="abs" style="left:671px;top:562px;width:2px;height:2px;background:#043c04;"></div>
<div class="abs" style="left:717px;top:562px;width:2px;height:2px;background:#043c04;"></div>
<div class="abs" style="left:718px;top:490px;width:5px;height:28px;background:#5a5a5a;"></div>
<div class="abs" style="left:44px;top:565px;width:30px;height:29px;background:#d0d0d0;"></div>
<div class="st" style="left:79px;top:569px;letter-spacing:.1px;width:195.5px;overflow:hidden"><span style="letter-spacing:-.75px">RGB </span>208 208 208 <span style="letter-spacing:.45px">#d0d0d0</span></div>
<svg style="left:283.5px;top:572.5px" width="13" height="13" viewBox="0 0 13 13"><path d="M6.5 0 V13 M0 6.5 H13" stroke="#d6d6d6" stroke-width="2"/></svg>
<div class="st" style="left:302px;top:569px;width:37px;overflow:hidden;letter-spacing:.4px">11 21</div>
<div class="st" style="left:516.5px;top:569px;letter-spacing:.16px">Frame:</div>
<div class="combo" style="left:573px;top:565px;width:70px;height:29px"><span style="top:3.5px;left:6px">5</span></div>
<div class="st" style="left:653px;top:567px;font-size:15px">+</div>
<div class="combo" style="left:674px;top:565px;width:79px;height:29px"><span style="top:3.5px;left:5px;letter-spacing:-.36px">400.0%</span></div>
<svg style="left:0;top:0" width="762" height="596" viewBox="0 0 762 596"><g transform="translate(27.6,576.6) rotate(45)"><rect x="-3" y="0" width="6" height="19.5" rx="3" fill="none" stroke="#d6d6d6" stroke-width="1.4"/><rect x="-7.5" y="-2.5" width="15" height="5" fill="#d6d6d6"/><rect x="-3.3" y="-8.6" width="6.6" height="8" rx="2.8" fill="#d6d6d6"/></g></svg>
<div class="abs" style="left:728px;top:215px;width:32px;height:31px;background:#1b1b1b;"></div>
<div class="abs" style="left:728px;top:530px;width:32px;height:32px;background:#1b1b1b;"></div>
<svg style="left:0;top:0" width="762" height="596" viewBox="0 0 762 596"><g fill="none" stroke="#d6d6d6" stroke-width="2"><path d="M733 134 V129 H738.5 M741.5 129 H747.5 M750.5 129 H755.5 V134 M755.5 136.3 V141.7 M755.5 144 V148 H750.5 M747.5 148 H741.5 M738.5 148 H733 V144 M733 141.7 V136.3"/></g><g transform="translate(734,178.3) rotate(-43.6)"><path d="M5.5 -3.4 H26 A3.4 3.4 0 0 1 26 3.4 H5.5 Z" fill="#d6d6d6"/><path d="M5.5 -3.4 L0.3 0 L5.5 3.4 Z" fill="none" stroke="#d6d6d6" stroke-width="1.1"/><path d="M0 0 L2 -1.2 V1.2 Z" fill="#d6d6d6"/><circle cx="25.6" cy="0" r="1.7" fill="none" stroke="#262626" stroke-width="1"/></g><polygon points="749.8,190 757.2,199 747,207.8 740.2,199.7" fill="#d6d6d6"/><path d="M732 208.2 H757.5 M732.5 208 L741 199.3" stroke="#d6d6d6" stroke-width="1.3" fill="none"/><g transform="translate(748.2,227.3) rotate(45)"><rect x="-3" y="0" width="6" height="19.5" rx="3" fill="none" stroke="#d6d6d6" stroke-width="1.4"/><rect x="-7.5" y="-2.5" width="15" height="5" fill="#d6d6d6"/><rect x="-3.3" y="-8.6" width="6.6" height="8" rx="2.8" fill="#d6d6d6"/></g><g fill="#d6d6d6"><rect x="739.3" y="253" width="2.6" height="10" rx="1.3"/><rect x="743.2" y="251" width="2.8" height="12" rx="1.4"/><rect x="747.1" y="251" width="2.8" height="12" rx="1.4"/><rect x="751.1" y="256" width="2.6" height="9" rx="1.3" transform="rotate(8 752.4 264)"/><path d="M739.3 260.4 H752.3 L753.6 262 Q752.8 266 750.1 268.6 Q748.5 271.9 745.5 271.9 Q742.8 271.9 741 270.2 L734 263.3 V261.3 H736.6 L739.3 263.3 Z"/></g><g fill="#d6d6d6"><rect x="743" y="284" width="2" height="18"/><rect x="735" y="292" width="18" height="2"/><polygon points="744,281 749,286.5 739,286.5"/><polygon points="744,305 749,299.5 739,299.5"/><polygon points="732,293 737.5,288 737.5,298"/><polygon points="756,293 750.5,288 750.5,298"/></g><defs><linearGradient id="gr" x1="0" x2="1" y1="0" y2="0"><stop offset="0" stop-color="#d8d8d8"/><stop offset="0.25" stop-color="#cfcfcf"/><stop offset="1" stop-color="#6c6c6c"/></linearGradient></defs><rect x="735" y="318" width="20" height="14" fill="url(#gr)" stroke="#d6d6d6" stroke-width="1"/><path d="M735 363.5 L751.8 347.2" stroke="#d6d6d6" stroke-width="2"/><rect x="733" y="377" width="21.5" height="18" fill="#d6d6d6"/><path d="M742.1 403.9 L750.9 409.8 Q751.6 413 751.2 416.8 L747.7 421.6 L743.4 425.9 H738 L735.9 423.2 V417.8 L739.7 413.6 L743.4 411.1 Q745.2 409 743.7 406.6 Z" fill="#cfcfcf"/><rect x="736.7" y="441.2" width="14.6" height="2.2" fill="#d6d6d6"/><rect x="736.7" y="445.6" width="14.6" height="2.2" fill="#d6d6d6"/><rect x="736.7" y="449.9" width="14.6" height="2.2" fill="#d6d6d6"/><rect x="736.7" y="454.2" width="14.6" height="2.2" fill="#d6d6d6"/><rect x="735" y="504" width="20" height="20" fill="none" stroke="#d6d6d6" stroke-width="2"/><rect x="740" y="509" width="2" height="10" fill="#d6d6d6"/><rect x="748.4" y="509" width="2" height="10" fill="#d6d6d6"/><rect x="744.2" y="511.5" width="2" height="2" fill="#d6d6d6"/><rect x="744.2" y="515.5" width="2" height="2" fill="#d6d6d6"/><rect x="740" y="542" width="8" height="8" fill="#000"/><rect x="741" y="543.5" width="0.8" height="0.8" fill="#2a2a2a"/><rect x="746.2" y="543.5" width="0.8" height="0.8" fill="#2a2a2a"/><rect x="741" y="545.5" width="0.8" height="0.8" fill="#2a2a2a"/><rect x="746.2" y="545.5" width="0.8" height="0.8" fill="#2a2a2a"/><rect x="741" y="547.5" width="0.8" height="0.8" fill="#2a2a2a"/><rect x="746.2" y="547.5" width="0.8" height="0.8" fill="#2a2a2a"/></svg>
<!--TOOLS-->
<div id="frame" class="abs"></div>
</div>
</body></html>
